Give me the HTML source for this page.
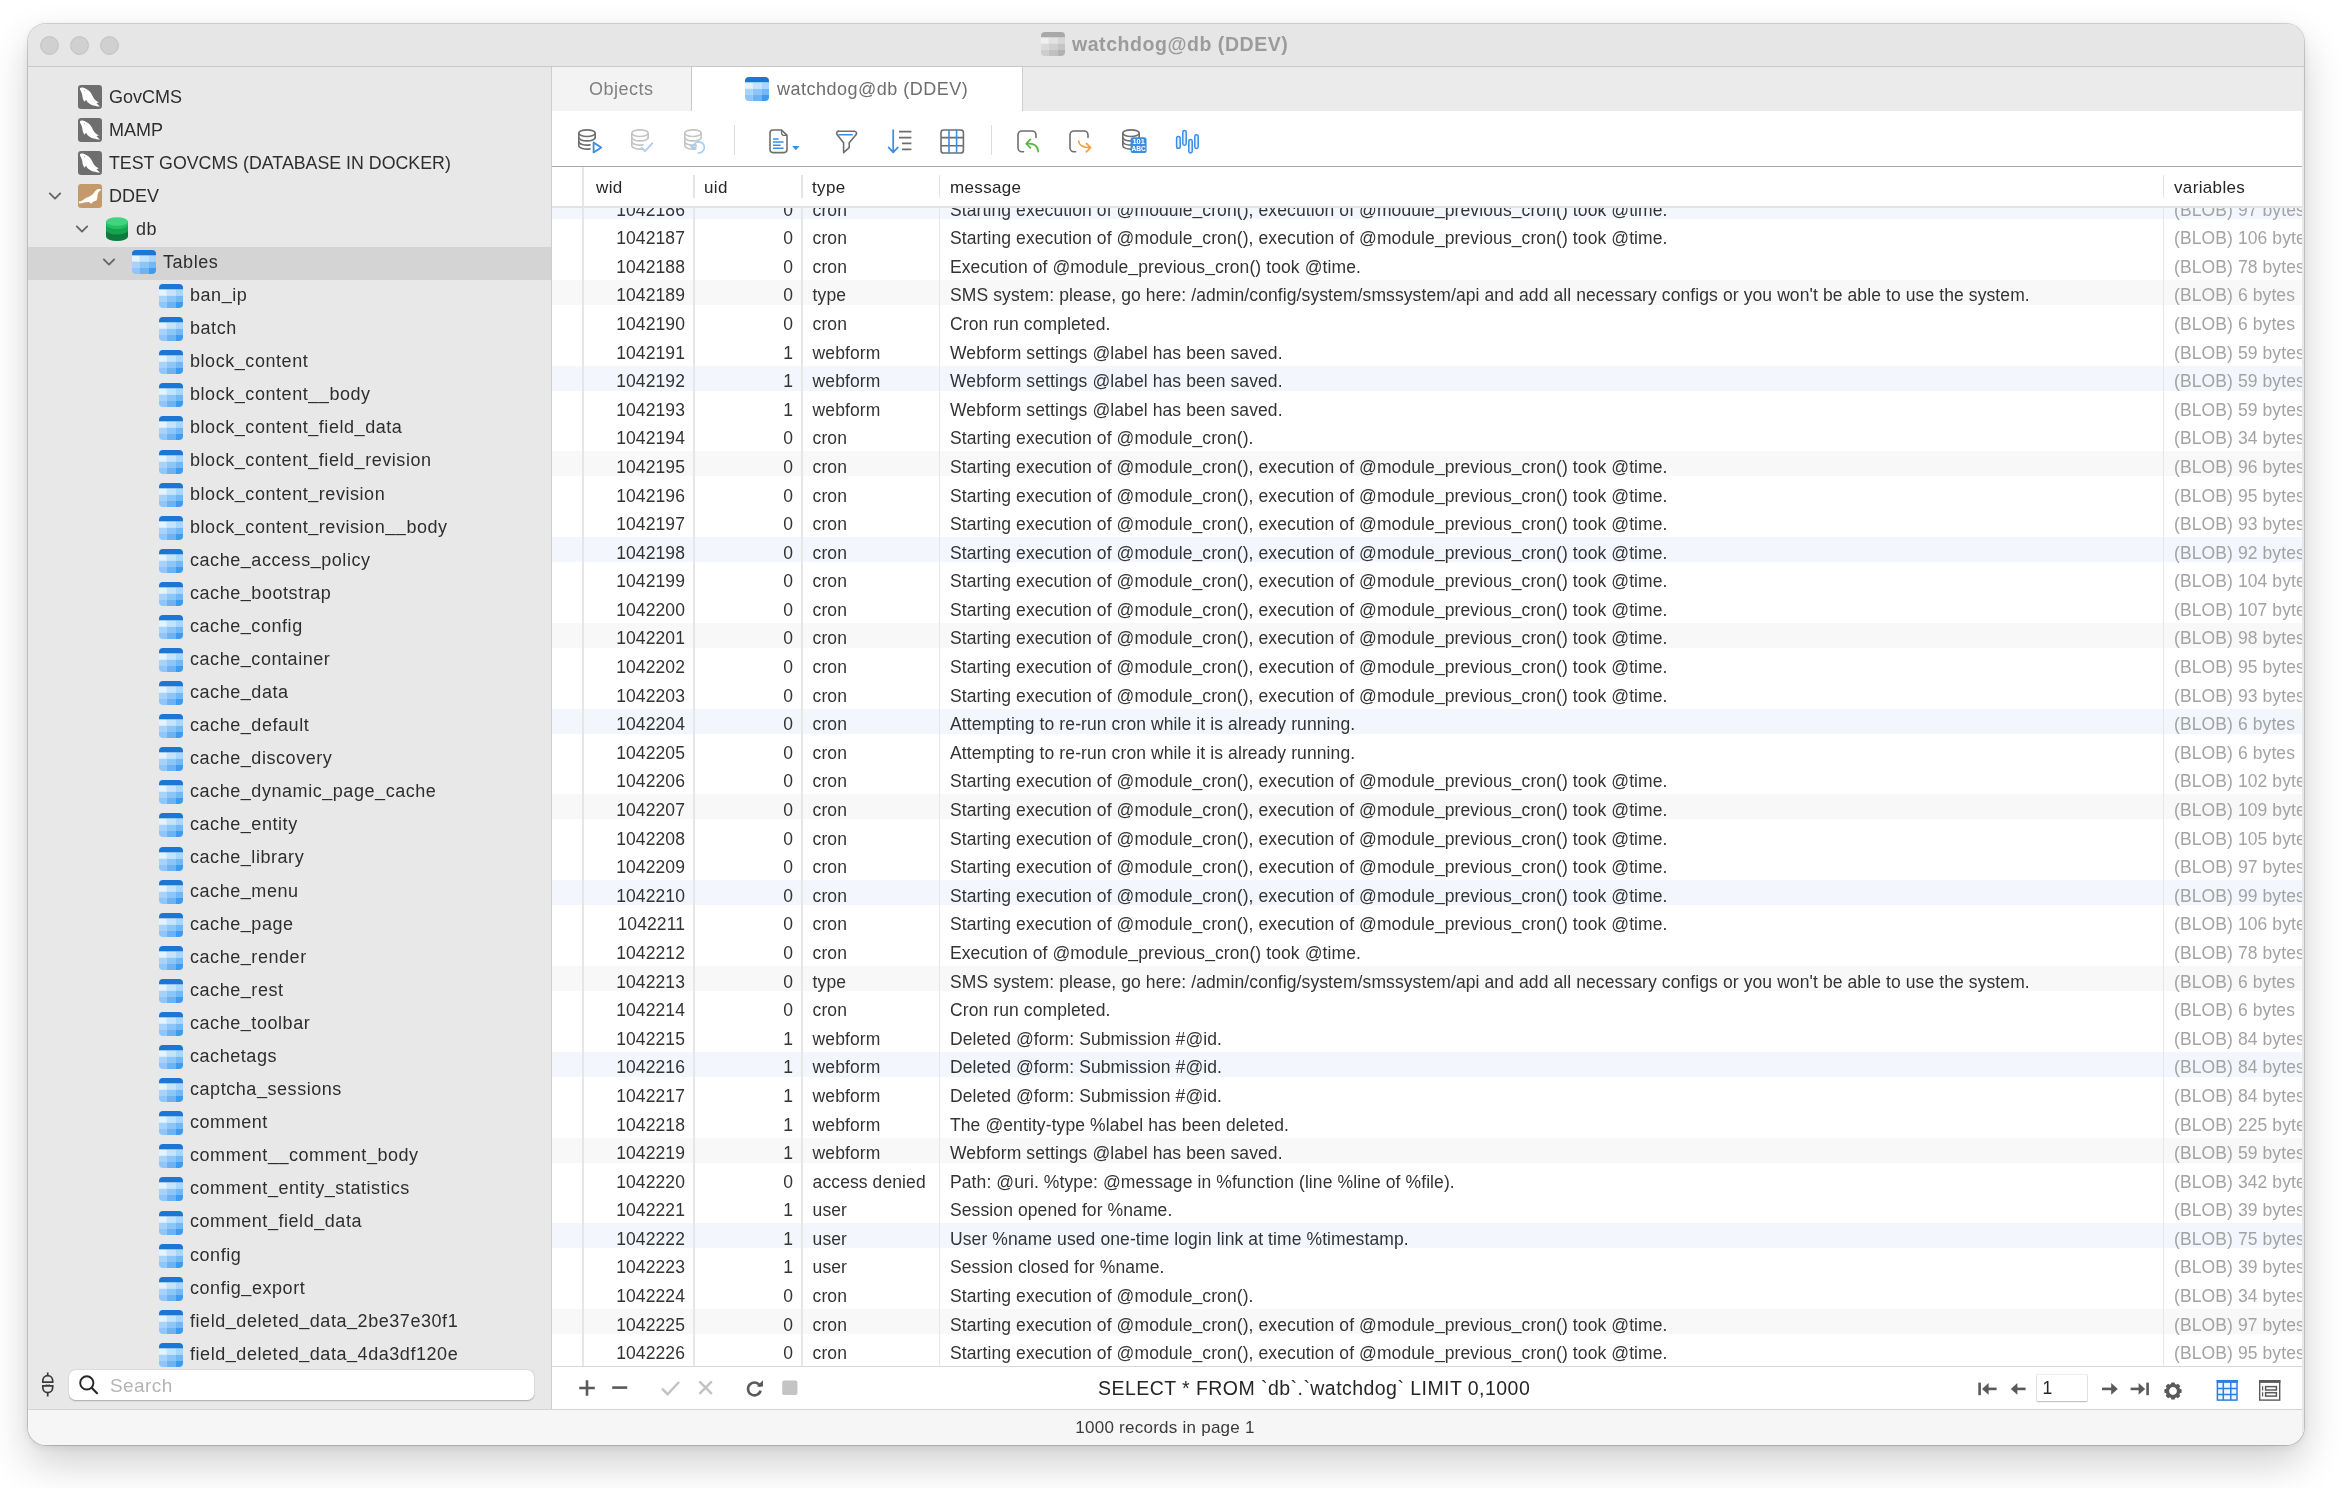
<!DOCTYPE html>
<html><head><meta charset="utf-8"><title>watchdog@db (DDEV)</title><style>
*{margin:0;padding:0;box-sizing:border-box}
html,body{width:2350px;height:1488px;overflow:hidden;background:#fff;font-family:"Liberation Sans", sans-serif;}
#win{will-change:transform;position:absolute;left:28px;top:24px;width:2276px;height:1421px;border-radius:18px;overflow:hidden;
  background:#f6f6f6;box-shadow:0 0 0 1px rgba(0,0,0,0.16),0 18px 40px rgba(0,0,0,0.19),0 2px 10px rgba(0,0,0,0.09);}
.a{position:absolute}
.t{position:absolute;white-space:pre;line-height:1;-webkit-font-smoothing:antialiased}
svg{position:absolute;overflow:visible}
</style></head>
<body><div id="win">
<div class="a" style="left:0px;top:-1px;width:2277px;height:43px;background:#e6e6e6"></div>
<div class="a" style="left:0px;top:42px;width:2277px;height:1px;background:#c9c9c9"></div>
<svg style="left:11.5px;top:11.5px" width="19" height="19" viewBox="0 0 19 19"><circle cx="9.5" cy="9.5" r="8.9" fill="#d0d0d0" stroke="#bdbdbd" stroke-width="0.9"/></svg>
<svg style="left:41.5px;top:11.5px" width="19" height="19" viewBox="0 0 19 19"><circle cx="9.5" cy="9.5" r="8.9" fill="#d0d0d0" stroke="#bdbdbd" stroke-width="0.9"/></svg>
<svg style="left:71.5px;top:11.5px" width="19" height="19" viewBox="0 0 19 19"><circle cx="9.5" cy="9.5" r="8.9" fill="#d0d0d0" stroke="#bdbdbd" stroke-width="0.9"/></svg>
<svg style="left:1013px;top:8px" width="24" height="24" viewBox="0 0 24 24"><defs><clipPath id="c1041_32"><rect x="0" y="0" width="24" height="24" rx="4.0"/></clipPath></defs><g clip-path="url(#c1041_32)"><rect x="0" y="0" width="24" height="5.60" fill="#a8a8a8"/><rect x="0.00" y="5.50" width="7.70" height="6.30" fill="#f0f0f0"/><rect x="7.70" y="5.50" width="9.30" height="6.30" fill="#e2e2e2"/><rect x="17.00" y="5.50" width="7.00" height="6.30" fill="#d6d6d6"/><rect x="0.00" y="11.80" width="7.70" height="6.20" fill="#dadada"/><rect x="7.70" y="11.80" width="9.30" height="6.20" fill="#cfcfcf"/><rect x="17.00" y="11.80" width="7.00" height="6.20" fill="#c4c4c4"/><rect x="0.00" y="18.00" width="7.70" height="6.00" fill="#cdcdcd"/><rect x="7.70" y="18.00" width="9.30" height="6.00" fill="#c0c0c0"/><rect x="17.00" y="18.00" width="7.00" height="6.00" fill="#b2b2b2"/></g></svg>
<div class="t" style="left:1044px;top:10.69px;font-size:19.5px;color:#9b9b9b;letter-spacing:0.55px;font-weight:bold;">watchdog@db (DDEV)</div>
<div class="a" style="left:0px;top:43px;width:523px;height:1342px;background:#e8e8e8"></div>
<div class="a" style="left:523px;top:43px;width:1px;height:1342px;background:#cdcdcd"></div>
<div class="a" style="left:0px;top:223px;width:523px;height:33px;background:#d4d4d4"></div>
<svg style="left:50px;top:61px" width="24" height="24" viewBox="0 0 24 24"><rect x="0" y="0" width="24" height="24" rx="3.2" fill="#6e6e6e"/><path d="M1.9 3.5 C2.5 2.2 4.5 2.2 5.6 2.7 C8 3.6 10.5 5 12 6.8 C13.5 8.6 14.6 11 15.6 13 C16.6 14.8 18.6 16.4 20.9 17.3 L18.5 18.3 L21.9 21.6 C20 21.4 17.4 21 15.5 20.5 C13 19.8 10.8 18.6 9.4 17 C8.8 16.2 8.4 15.4 8.2 14.7 L6.2 16.7 L5.2 14.3 C4.8 13.4 4.5 12.5 4.5 11.7 C4.3 9.6 3.6 7.4 3 6.4 C2.4 5.4 1.9 4.5 1.9 3.5 Z" fill="#fff"/><circle cx="6.5" cy="5.7" r="0.55" fill="#9a9a9a"/></svg>
<div class="t" style="left:81px;top:64.36px;font-size:18px;color:#2e2e2e;letter-spacing:0px;font-weight:normal;">GovCMS</div>
<svg style="left:50px;top:94px" width="24" height="24" viewBox="0 0 24 24"><rect x="0" y="0" width="24" height="24" rx="3.2" fill="#6e6e6e"/><path d="M1.9 3.5 C2.5 2.2 4.5 2.2 5.6 2.7 C8 3.6 10.5 5 12 6.8 C13.5 8.6 14.6 11 15.6 13 C16.6 14.8 18.6 16.4 20.9 17.3 L18.5 18.3 L21.9 21.6 C20 21.4 17.4 21 15.5 20.5 C13 19.8 10.8 18.6 9.4 17 C8.8 16.2 8.4 15.4 8.2 14.7 L6.2 16.7 L5.2 14.3 C4.8 13.4 4.5 12.5 4.5 11.7 C4.3 9.6 3.6 7.4 3 6.4 C2.4 5.4 1.9 4.5 1.9 3.5 Z" fill="#fff"/><circle cx="6.5" cy="5.7" r="0.55" fill="#9a9a9a"/></svg>
<div class="t" style="left:81px;top:97.36px;font-size:18px;color:#2e2e2e;letter-spacing:0px;font-weight:normal;">MAMP</div>
<svg style="left:50px;top:127px" width="24" height="24" viewBox="0 0 24 24"><rect x="0" y="0" width="24" height="24" rx="3.2" fill="#6e6e6e"/><path d="M1.9 3.5 C2.5 2.2 4.5 2.2 5.6 2.7 C8 3.6 10.5 5 12 6.8 C13.5 8.6 14.6 11 15.6 13 C16.6 14.8 18.6 16.4 20.9 17.3 L18.5 18.3 L21.9 21.6 C20 21.4 17.4 21 15.5 20.5 C13 19.8 10.8 18.6 9.4 17 C8.8 16.2 8.4 15.4 8.2 14.7 L6.2 16.7 L5.2 14.3 C4.8 13.4 4.5 12.5 4.5 11.7 C4.3 9.6 3.6 7.4 3 6.4 C2.4 5.4 1.9 4.5 1.9 3.5 Z" fill="#fff"/><circle cx="6.5" cy="5.7" r="0.55" fill="#9a9a9a"/></svg>
<div class="t" style="left:81px;top:130.53px;font-size:17.8px;color:#2e2e2e;letter-spacing:0px;font-weight:normal;">TEST GOVCMS (DATABASE IN DOCKER)</div>
<svg style="left:20px;top:167px" width="14" height="10" viewBox="0 0 14 10"><path d="M1.8 2.4 L7 7.6 L12.2 2.4" fill="none" stroke="#666666" stroke-width="1.9" stroke-linecap="round" stroke-linejoin="round"/></svg>
<svg style="left:50px;top:160px" width="24" height="24" viewBox="0 0 24 24"><rect x="0" y="0" width="24" height="24" rx="3.2" fill="#c49a6c"/><path d="M22.7 5.3 C22.2 4.7 21 4.8 19.6 5.3 C18.2 5.9 17 7.2 15.6 9.3 C14.6 10.6 13 11.8 10.9 12.8 C8.6 13.8 6.4 14.8 4.4 16.4 C3.4 17 2.2 17.3 1 17.6 C0.8 18.4 1 19.2 1.6 19.6 C2.6 19.5 3.4 19.3 4.4 19.1 C6.4 18.5 8.6 18.1 10.9 18.1 C11.6 18.4 12.2 19 13 19.8 C13.6 19.4 13.9 19 14.1 18.7 C15 17.8 16.2 17.4 18.4 16.6 C19 15.6 19.3 14.4 19.5 12.6 C19.7 10.6 19.9 9.4 20.4 8.6 C21 7.6 21.8 7.1 22.6 6.6 C22.9 6.2 22.9 5.7 22.7 5.3 Z" fill="#fff"/></svg>
<div class="t" style="left:81px;top:163.36px;font-size:18px;color:#2e2e2e;letter-spacing:0px;font-weight:normal;">DDEV</div>
<svg style="left:47px;top:200px" width="14" height="10" viewBox="0 0 14 10"><path d="M1.8 2.4 L7 7.6 L12.2 2.4" fill="none" stroke="#666666" stroke-width="1.9" stroke-linecap="round" stroke-linejoin="round"/></svg>
<svg style="left:78px;top:193px" width="22" height="24" viewBox="0 0 22 24"><ellipse cx="11" cy="19.5" rx="11" ry="4.5" fill="#0d7a3e"/><rect x="0" y="13" width="22" height="6.5" fill="#0d7a3e"/>
<ellipse cx="11" cy="13" rx="11" ry="4.5" fill="#16a34f"/><rect x="0" y="7.5" width="22" height="5.5" fill="#16a34f"/>
<ellipse cx="11" cy="7.5" rx="11" ry="4.5" fill="#22c063"/><rect x="0" y="4.5" width="22" height="3" fill="#22c063"/>
<ellipse cx="11" cy="4.5" rx="11" ry="4.3" fill="#3fd47d"/></svg>
<div class="t" style="left:108px;top:196.36px;font-size:18px;color:#2e2e2e;letter-spacing:0.55px;font-weight:normal;">db</div>
<svg style="left:74px;top:233px" width="14" height="10" viewBox="0 0 14 10"><path d="M1.8 2.4 L7 7.6 L12.2 2.4" fill="none" stroke="#666666" stroke-width="1.9" stroke-linecap="round" stroke-linejoin="round"/></svg>
<svg style="left:104px;top:226px" width="24" height="24" viewBox="0 0 24 24"><defs><clipPath id="c132_250"><rect x="0" y="0" width="24" height="24" rx="4.0"/></clipPath></defs><g clip-path="url(#c132_250)"><rect x="0" y="0" width="24" height="5.60" fill="#1b76d4"/><rect x="0.00" y="5.50" width="7.70" height="6.30" fill="#e3f3ff"/><rect x="7.70" y="5.50" width="9.30" height="6.30" fill="#c3e4ff"/><rect x="17.00" y="5.50" width="7.00" height="6.30" fill="#a9d6fd"/><rect x="0.00" y="11.80" width="7.70" height="6.20" fill="#a7d3fb"/><rect x="7.70" y="11.80" width="9.30" height="6.20" fill="#8cc6f9"/><rect x="17.00" y="11.80" width="7.00" height="6.20" fill="#72b8f7"/><rect x="0.00" y="18.00" width="7.70" height="6.00" fill="#8fc5f8"/><rect x="7.70" y="18.00" width="9.30" height="6.00" fill="#6db3f4"/><rect x="17.00" y="18.00" width="7.00" height="6.00" fill="#3d9cf2"/></g></svg>
<div class="t" style="left:135px;top:229.36px;font-size:18px;color:#2e2e2e;letter-spacing:0.55px;font-weight:normal;">Tables</div>
<svg style="left:131px;top:260.0px" width="24" height="24" viewBox="0 0 24 24"><defs><clipPath id="c159_284_0"><rect x="0" y="0" width="24" height="24" rx="4.0"/></clipPath></defs><g clip-path="url(#c159_284_0)"><rect x="0" y="0" width="24" height="5.60" fill="#1b76d4"/><rect x="0.00" y="5.50" width="7.70" height="6.30" fill="#e3f3ff"/><rect x="7.70" y="5.50" width="9.30" height="6.30" fill="#c3e4ff"/><rect x="17.00" y="5.50" width="7.00" height="6.30" fill="#a9d6fd"/><rect x="0.00" y="11.80" width="7.70" height="6.20" fill="#a7d3fb"/><rect x="7.70" y="11.80" width="9.30" height="6.20" fill="#8cc6f9"/><rect x="17.00" y="11.80" width="7.00" height="6.20" fill="#72b8f7"/><rect x="0.00" y="18.00" width="7.70" height="6.00" fill="#8fc5f8"/><rect x="7.70" y="18.00" width="9.30" height="6.00" fill="#6db3f4"/><rect x="17.00" y="18.00" width="7.00" height="6.00" fill="#3d9cf2"/></g></svg>
<div class="t" style="left:162px;top:261.96px;font-size:18px;color:#2e2e2e;letter-spacing:0.55px;font-weight:normal;">ban<span style="position:relative;top:-1.6px">_</span>ip</div>
<svg style="left:131px;top:293.1px" width="24" height="24" viewBox="0 0 24 24"><defs><clipPath id="c159_317_1"><rect x="0" y="0" width="24" height="24" rx="4.0"/></clipPath></defs><g clip-path="url(#c159_317_1)"><rect x="0" y="0" width="24" height="5.60" fill="#1b76d4"/><rect x="0.00" y="5.50" width="7.70" height="6.30" fill="#e3f3ff"/><rect x="7.70" y="5.50" width="9.30" height="6.30" fill="#c3e4ff"/><rect x="17.00" y="5.50" width="7.00" height="6.30" fill="#a9d6fd"/><rect x="0.00" y="11.80" width="7.70" height="6.20" fill="#a7d3fb"/><rect x="7.70" y="11.80" width="9.30" height="6.20" fill="#8cc6f9"/><rect x="17.00" y="11.80" width="7.00" height="6.20" fill="#72b8f7"/><rect x="0.00" y="18.00" width="7.70" height="6.00" fill="#8fc5f8"/><rect x="7.70" y="18.00" width="9.30" height="6.00" fill="#6db3f4"/><rect x="17.00" y="18.00" width="7.00" height="6.00" fill="#3d9cf2"/></g></svg>
<div class="t" style="left:162px;top:295.05px;font-size:18px;color:#2e2e2e;letter-spacing:0.55px;font-weight:normal;">batch</div>
<svg style="left:131px;top:326.2px" width="24" height="24" viewBox="0 0 24 24"><defs><clipPath id="c159_350_2"><rect x="0" y="0" width="24" height="24" rx="4.0"/></clipPath></defs><g clip-path="url(#c159_350_2)"><rect x="0" y="0" width="24" height="5.60" fill="#1b76d4"/><rect x="0.00" y="5.50" width="7.70" height="6.30" fill="#e3f3ff"/><rect x="7.70" y="5.50" width="9.30" height="6.30" fill="#c3e4ff"/><rect x="17.00" y="5.50" width="7.00" height="6.30" fill="#a9d6fd"/><rect x="0.00" y="11.80" width="7.70" height="6.20" fill="#a7d3fb"/><rect x="7.70" y="11.80" width="9.30" height="6.20" fill="#8cc6f9"/><rect x="17.00" y="11.80" width="7.00" height="6.20" fill="#72b8f7"/><rect x="0.00" y="18.00" width="7.70" height="6.00" fill="#8fc5f8"/><rect x="7.70" y="18.00" width="9.30" height="6.00" fill="#6db3f4"/><rect x="17.00" y="18.00" width="7.00" height="6.00" fill="#3d9cf2"/></g></svg>
<div class="t" style="left:162px;top:328.14px;font-size:18px;color:#2e2e2e;letter-spacing:0.55px;font-weight:normal;">block<span style="position:relative;top:-1.6px">_</span>content</div>
<svg style="left:131px;top:359.3px" width="24" height="24" viewBox="0 0 24 24"><defs><clipPath id="c159_383_3"><rect x="0" y="0" width="24" height="24" rx="4.0"/></clipPath></defs><g clip-path="url(#c159_383_3)"><rect x="0" y="0" width="24" height="5.60" fill="#1b76d4"/><rect x="0.00" y="5.50" width="7.70" height="6.30" fill="#e3f3ff"/><rect x="7.70" y="5.50" width="9.30" height="6.30" fill="#c3e4ff"/><rect x="17.00" y="5.50" width="7.00" height="6.30" fill="#a9d6fd"/><rect x="0.00" y="11.80" width="7.70" height="6.20" fill="#a7d3fb"/><rect x="7.70" y="11.80" width="9.30" height="6.20" fill="#8cc6f9"/><rect x="17.00" y="11.80" width="7.00" height="6.20" fill="#72b8f7"/><rect x="0.00" y="18.00" width="7.70" height="6.00" fill="#8fc5f8"/><rect x="7.70" y="18.00" width="9.30" height="6.00" fill="#6db3f4"/><rect x="17.00" y="18.00" width="7.00" height="6.00" fill="#3d9cf2"/></g></svg>
<div class="t" style="left:162px;top:361.23px;font-size:18px;color:#2e2e2e;letter-spacing:0.55px;font-weight:normal;">block<span style="position:relative;top:-1.6px">_</span>content<span style="position:relative;top:-1.6px">_</span><span style="position:relative;top:-1.6px">_</span>body</div>
<svg style="left:131px;top:392.4px" width="24" height="24" viewBox="0 0 24 24"><defs><clipPath id="c159_416_4"><rect x="0" y="0" width="24" height="24" rx="4.0"/></clipPath></defs><g clip-path="url(#c159_416_4)"><rect x="0" y="0" width="24" height="5.60" fill="#1b76d4"/><rect x="0.00" y="5.50" width="7.70" height="6.30" fill="#e3f3ff"/><rect x="7.70" y="5.50" width="9.30" height="6.30" fill="#c3e4ff"/><rect x="17.00" y="5.50" width="7.00" height="6.30" fill="#a9d6fd"/><rect x="0.00" y="11.80" width="7.70" height="6.20" fill="#a7d3fb"/><rect x="7.70" y="11.80" width="9.30" height="6.20" fill="#8cc6f9"/><rect x="17.00" y="11.80" width="7.00" height="6.20" fill="#72b8f7"/><rect x="0.00" y="18.00" width="7.70" height="6.00" fill="#8fc5f8"/><rect x="7.70" y="18.00" width="9.30" height="6.00" fill="#6db3f4"/><rect x="17.00" y="18.00" width="7.00" height="6.00" fill="#3d9cf2"/></g></svg>
<div class="t" style="left:162px;top:394.32px;font-size:18px;color:#2e2e2e;letter-spacing:0.55px;font-weight:normal;">block<span style="position:relative;top:-1.6px">_</span>content<span style="position:relative;top:-1.6px">_</span>field<span style="position:relative;top:-1.6px">_</span>data</div>
<svg style="left:131px;top:425.5px" width="24" height="24" viewBox="0 0 24 24"><defs><clipPath id="c159_449_5"><rect x="0" y="0" width="24" height="24" rx="4.0"/></clipPath></defs><g clip-path="url(#c159_449_5)"><rect x="0" y="0" width="24" height="5.60" fill="#1b76d4"/><rect x="0.00" y="5.50" width="7.70" height="6.30" fill="#e3f3ff"/><rect x="7.70" y="5.50" width="9.30" height="6.30" fill="#c3e4ff"/><rect x="17.00" y="5.50" width="7.00" height="6.30" fill="#a9d6fd"/><rect x="0.00" y="11.80" width="7.70" height="6.20" fill="#a7d3fb"/><rect x="7.70" y="11.80" width="9.30" height="6.20" fill="#8cc6f9"/><rect x="17.00" y="11.80" width="7.00" height="6.20" fill="#72b8f7"/><rect x="0.00" y="18.00" width="7.70" height="6.00" fill="#8fc5f8"/><rect x="7.70" y="18.00" width="9.30" height="6.00" fill="#6db3f4"/><rect x="17.00" y="18.00" width="7.00" height="6.00" fill="#3d9cf2"/></g></svg>
<div class="t" style="left:162px;top:427.41px;font-size:18px;color:#2e2e2e;letter-spacing:0.55px;font-weight:normal;">block<span style="position:relative;top:-1.6px">_</span>content<span style="position:relative;top:-1.6px">_</span>field<span style="position:relative;top:-1.6px">_</span>revision</div>
<svg style="left:131px;top:458.5px" width="24" height="24" viewBox="0 0 24 24"><defs><clipPath id="c159_482_5"><rect x="0" y="0" width="24" height="24" rx="4.0"/></clipPath></defs><g clip-path="url(#c159_482_5)"><rect x="0" y="0" width="24" height="5.60" fill="#1b76d4"/><rect x="0.00" y="5.50" width="7.70" height="6.30" fill="#e3f3ff"/><rect x="7.70" y="5.50" width="9.30" height="6.30" fill="#c3e4ff"/><rect x="17.00" y="5.50" width="7.00" height="6.30" fill="#a9d6fd"/><rect x="0.00" y="11.80" width="7.70" height="6.20" fill="#a7d3fb"/><rect x="7.70" y="11.80" width="9.30" height="6.20" fill="#8cc6f9"/><rect x="17.00" y="11.80" width="7.00" height="6.20" fill="#72b8f7"/><rect x="0.00" y="18.00" width="7.70" height="6.00" fill="#8fc5f8"/><rect x="7.70" y="18.00" width="9.30" height="6.00" fill="#6db3f4"/><rect x="17.00" y="18.00" width="7.00" height="6.00" fill="#3d9cf2"/></g></svg>
<div class="t" style="left:162px;top:460.50px;font-size:18px;color:#2e2e2e;letter-spacing:0.55px;font-weight:normal;">block<span style="position:relative;top:-1.6px">_</span>content<span style="position:relative;top:-1.6px">_</span>revision</div>
<svg style="left:131px;top:491.6px" width="24" height="24" viewBox="0 0 24 24"><defs><clipPath id="c159_515_6"><rect x="0" y="0" width="24" height="24" rx="4.0"/></clipPath></defs><g clip-path="url(#c159_515_6)"><rect x="0" y="0" width="24" height="5.60" fill="#1b76d4"/><rect x="0.00" y="5.50" width="7.70" height="6.30" fill="#e3f3ff"/><rect x="7.70" y="5.50" width="9.30" height="6.30" fill="#c3e4ff"/><rect x="17.00" y="5.50" width="7.00" height="6.30" fill="#a9d6fd"/><rect x="0.00" y="11.80" width="7.70" height="6.20" fill="#a7d3fb"/><rect x="7.70" y="11.80" width="9.30" height="6.20" fill="#8cc6f9"/><rect x="17.00" y="11.80" width="7.00" height="6.20" fill="#72b8f7"/><rect x="0.00" y="18.00" width="7.70" height="6.00" fill="#8fc5f8"/><rect x="7.70" y="18.00" width="9.30" height="6.00" fill="#6db3f4"/><rect x="17.00" y="18.00" width="7.00" height="6.00" fill="#3d9cf2"/></g></svg>
<div class="t" style="left:162px;top:493.59px;font-size:18px;color:#2e2e2e;letter-spacing:0.55px;font-weight:normal;">block<span style="position:relative;top:-1.6px">_</span>content<span style="position:relative;top:-1.6px">_</span>revision<span style="position:relative;top:-1.6px">_</span><span style="position:relative;top:-1.6px">_</span>body</div>
<svg style="left:131px;top:524.7px" width="24" height="24" viewBox="0 0 24 24"><defs><clipPath id="c159_548_7"><rect x="0" y="0" width="24" height="24" rx="4.0"/></clipPath></defs><g clip-path="url(#c159_548_7)"><rect x="0" y="0" width="24" height="5.60" fill="#1b76d4"/><rect x="0.00" y="5.50" width="7.70" height="6.30" fill="#e3f3ff"/><rect x="7.70" y="5.50" width="9.30" height="6.30" fill="#c3e4ff"/><rect x="17.00" y="5.50" width="7.00" height="6.30" fill="#a9d6fd"/><rect x="0.00" y="11.80" width="7.70" height="6.20" fill="#a7d3fb"/><rect x="7.70" y="11.80" width="9.30" height="6.20" fill="#8cc6f9"/><rect x="17.00" y="11.80" width="7.00" height="6.20" fill="#72b8f7"/><rect x="0.00" y="18.00" width="7.70" height="6.00" fill="#8fc5f8"/><rect x="7.70" y="18.00" width="9.30" height="6.00" fill="#6db3f4"/><rect x="17.00" y="18.00" width="7.00" height="6.00" fill="#3d9cf2"/></g></svg>
<div class="t" style="left:162px;top:526.68px;font-size:18px;color:#2e2e2e;letter-spacing:0.55px;font-weight:normal;">cache<span style="position:relative;top:-1.6px">_</span>access<span style="position:relative;top:-1.6px">_</span>policy</div>
<svg style="left:131px;top:557.8px" width="24" height="24" viewBox="0 0 24 24"><defs><clipPath id="c159_581_8"><rect x="0" y="0" width="24" height="24" rx="4.0"/></clipPath></defs><g clip-path="url(#c159_581_8)"><rect x="0" y="0" width="24" height="5.60" fill="#1b76d4"/><rect x="0.00" y="5.50" width="7.70" height="6.30" fill="#e3f3ff"/><rect x="7.70" y="5.50" width="9.30" height="6.30" fill="#c3e4ff"/><rect x="17.00" y="5.50" width="7.00" height="6.30" fill="#a9d6fd"/><rect x="0.00" y="11.80" width="7.70" height="6.20" fill="#a7d3fb"/><rect x="7.70" y="11.80" width="9.30" height="6.20" fill="#8cc6f9"/><rect x="17.00" y="11.80" width="7.00" height="6.20" fill="#72b8f7"/><rect x="0.00" y="18.00" width="7.70" height="6.00" fill="#8fc5f8"/><rect x="7.70" y="18.00" width="9.30" height="6.00" fill="#6db3f4"/><rect x="17.00" y="18.00" width="7.00" height="6.00" fill="#3d9cf2"/></g></svg>
<div class="t" style="left:162px;top:559.77px;font-size:18px;color:#2e2e2e;letter-spacing:0.55px;font-weight:normal;">cache<span style="position:relative;top:-1.6px">_</span>bootstrap</div>
<svg style="left:131px;top:590.9px" width="24" height="24" viewBox="0 0 24 24"><defs><clipPath id="c159_614_9"><rect x="0" y="0" width="24" height="24" rx="4.0"/></clipPath></defs><g clip-path="url(#c159_614_9)"><rect x="0" y="0" width="24" height="5.60" fill="#1b76d4"/><rect x="0.00" y="5.50" width="7.70" height="6.30" fill="#e3f3ff"/><rect x="7.70" y="5.50" width="9.30" height="6.30" fill="#c3e4ff"/><rect x="17.00" y="5.50" width="7.00" height="6.30" fill="#a9d6fd"/><rect x="0.00" y="11.80" width="7.70" height="6.20" fill="#a7d3fb"/><rect x="7.70" y="11.80" width="9.30" height="6.20" fill="#8cc6f9"/><rect x="17.00" y="11.80" width="7.00" height="6.20" fill="#72b8f7"/><rect x="0.00" y="18.00" width="7.70" height="6.00" fill="#8fc5f8"/><rect x="7.70" y="18.00" width="9.30" height="6.00" fill="#6db3f4"/><rect x="17.00" y="18.00" width="7.00" height="6.00" fill="#3d9cf2"/></g></svg>
<div class="t" style="left:162px;top:592.86px;font-size:18px;color:#2e2e2e;letter-spacing:0.55px;font-weight:normal;">cache<span style="position:relative;top:-1.6px">_</span>config</div>
<svg style="left:131px;top:624.0px" width="24" height="24" viewBox="0 0 24 24"><defs><clipPath id="c159_648_0"><rect x="0" y="0" width="24" height="24" rx="4.0"/></clipPath></defs><g clip-path="url(#c159_648_0)"><rect x="0" y="0" width="24" height="5.60" fill="#1b76d4"/><rect x="0.00" y="5.50" width="7.70" height="6.30" fill="#e3f3ff"/><rect x="7.70" y="5.50" width="9.30" height="6.30" fill="#c3e4ff"/><rect x="17.00" y="5.50" width="7.00" height="6.30" fill="#a9d6fd"/><rect x="0.00" y="11.80" width="7.70" height="6.20" fill="#a7d3fb"/><rect x="7.70" y="11.80" width="9.30" height="6.20" fill="#8cc6f9"/><rect x="17.00" y="11.80" width="7.00" height="6.20" fill="#72b8f7"/><rect x="0.00" y="18.00" width="7.70" height="6.00" fill="#8fc5f8"/><rect x="7.70" y="18.00" width="9.30" height="6.00" fill="#6db3f4"/><rect x="17.00" y="18.00" width="7.00" height="6.00" fill="#3d9cf2"/></g></svg>
<div class="t" style="left:162px;top:625.95px;font-size:18px;color:#2e2e2e;letter-spacing:0.55px;font-weight:normal;">cache<span style="position:relative;top:-1.6px">_</span>container</div>
<svg style="left:131px;top:657.1px" width="24" height="24" viewBox="0 0 24 24"><defs><clipPath id="c159_681_1"><rect x="0" y="0" width="24" height="24" rx="4.0"/></clipPath></defs><g clip-path="url(#c159_681_1)"><rect x="0" y="0" width="24" height="5.60" fill="#1b76d4"/><rect x="0.00" y="5.50" width="7.70" height="6.30" fill="#e3f3ff"/><rect x="7.70" y="5.50" width="9.30" height="6.30" fill="#c3e4ff"/><rect x="17.00" y="5.50" width="7.00" height="6.30" fill="#a9d6fd"/><rect x="0.00" y="11.80" width="7.70" height="6.20" fill="#a7d3fb"/><rect x="7.70" y="11.80" width="9.30" height="6.20" fill="#8cc6f9"/><rect x="17.00" y="11.80" width="7.00" height="6.20" fill="#72b8f7"/><rect x="0.00" y="18.00" width="7.70" height="6.00" fill="#8fc5f8"/><rect x="7.70" y="18.00" width="9.30" height="6.00" fill="#6db3f4"/><rect x="17.00" y="18.00" width="7.00" height="6.00" fill="#3d9cf2"/></g></svg>
<div class="t" style="left:162px;top:659.04px;font-size:18px;color:#2e2e2e;letter-spacing:0.55px;font-weight:normal;">cache<span style="position:relative;top:-1.6px">_</span>data</div>
<svg style="left:131px;top:690.2px" width="24" height="24" viewBox="0 0 24 24"><defs><clipPath id="c159_714_2"><rect x="0" y="0" width="24" height="24" rx="4.0"/></clipPath></defs><g clip-path="url(#c159_714_2)"><rect x="0" y="0" width="24" height="5.60" fill="#1b76d4"/><rect x="0.00" y="5.50" width="7.70" height="6.30" fill="#e3f3ff"/><rect x="7.70" y="5.50" width="9.30" height="6.30" fill="#c3e4ff"/><rect x="17.00" y="5.50" width="7.00" height="6.30" fill="#a9d6fd"/><rect x="0.00" y="11.80" width="7.70" height="6.20" fill="#a7d3fb"/><rect x="7.70" y="11.80" width="9.30" height="6.20" fill="#8cc6f9"/><rect x="17.00" y="11.80" width="7.00" height="6.20" fill="#72b8f7"/><rect x="0.00" y="18.00" width="7.70" height="6.00" fill="#8fc5f8"/><rect x="7.70" y="18.00" width="9.30" height="6.00" fill="#6db3f4"/><rect x="17.00" y="18.00" width="7.00" height="6.00" fill="#3d9cf2"/></g></svg>
<div class="t" style="left:162px;top:692.13px;font-size:18px;color:#2e2e2e;letter-spacing:0.55px;font-weight:normal;">cache<span style="position:relative;top:-1.6px">_</span>default</div>
<svg style="left:131px;top:723.3px" width="24" height="24" viewBox="0 0 24 24"><defs><clipPath id="c159_747_3"><rect x="0" y="0" width="24" height="24" rx="4.0"/></clipPath></defs><g clip-path="url(#c159_747_3)"><rect x="0" y="0" width="24" height="5.60" fill="#1b76d4"/><rect x="0.00" y="5.50" width="7.70" height="6.30" fill="#e3f3ff"/><rect x="7.70" y="5.50" width="9.30" height="6.30" fill="#c3e4ff"/><rect x="17.00" y="5.50" width="7.00" height="6.30" fill="#a9d6fd"/><rect x="0.00" y="11.80" width="7.70" height="6.20" fill="#a7d3fb"/><rect x="7.70" y="11.80" width="9.30" height="6.20" fill="#8cc6f9"/><rect x="17.00" y="11.80" width="7.00" height="6.20" fill="#72b8f7"/><rect x="0.00" y="18.00" width="7.70" height="6.00" fill="#8fc5f8"/><rect x="7.70" y="18.00" width="9.30" height="6.00" fill="#6db3f4"/><rect x="17.00" y="18.00" width="7.00" height="6.00" fill="#3d9cf2"/></g></svg>
<div class="t" style="left:162px;top:725.22px;font-size:18px;color:#2e2e2e;letter-spacing:0.55px;font-weight:normal;">cache<span style="position:relative;top:-1.6px">_</span>discovery</div>
<svg style="left:131px;top:756.4px" width="24" height="24" viewBox="0 0 24 24"><defs><clipPath id="c159_780_4"><rect x="0" y="0" width="24" height="24" rx="4.0"/></clipPath></defs><g clip-path="url(#c159_780_4)"><rect x="0" y="0" width="24" height="5.60" fill="#1b76d4"/><rect x="0.00" y="5.50" width="7.70" height="6.30" fill="#e3f3ff"/><rect x="7.70" y="5.50" width="9.30" height="6.30" fill="#c3e4ff"/><rect x="17.00" y="5.50" width="7.00" height="6.30" fill="#a9d6fd"/><rect x="0.00" y="11.80" width="7.70" height="6.20" fill="#a7d3fb"/><rect x="7.70" y="11.80" width="9.30" height="6.20" fill="#8cc6f9"/><rect x="17.00" y="11.80" width="7.00" height="6.20" fill="#72b8f7"/><rect x="0.00" y="18.00" width="7.70" height="6.00" fill="#8fc5f8"/><rect x="7.70" y="18.00" width="9.30" height="6.00" fill="#6db3f4"/><rect x="17.00" y="18.00" width="7.00" height="6.00" fill="#3d9cf2"/></g></svg>
<div class="t" style="left:162px;top:758.31px;font-size:18px;color:#2e2e2e;letter-spacing:0.55px;font-weight:normal;">cache<span style="position:relative;top:-1.6px">_</span>dynamic<span style="position:relative;top:-1.6px">_</span>page<span style="position:relative;top:-1.6px">_</span>cache</div>
<svg style="left:131px;top:789.4px" width="24" height="24" viewBox="0 0 24 24"><defs><clipPath id="c159_813_4"><rect x="0" y="0" width="24" height="24" rx="4.0"/></clipPath></defs><g clip-path="url(#c159_813_4)"><rect x="0" y="0" width="24" height="5.60" fill="#1b76d4"/><rect x="0.00" y="5.50" width="7.70" height="6.30" fill="#e3f3ff"/><rect x="7.70" y="5.50" width="9.30" height="6.30" fill="#c3e4ff"/><rect x="17.00" y="5.50" width="7.00" height="6.30" fill="#a9d6fd"/><rect x="0.00" y="11.80" width="7.70" height="6.20" fill="#a7d3fb"/><rect x="7.70" y="11.80" width="9.30" height="6.20" fill="#8cc6f9"/><rect x="17.00" y="11.80" width="7.00" height="6.20" fill="#72b8f7"/><rect x="0.00" y="18.00" width="7.70" height="6.00" fill="#8fc5f8"/><rect x="7.70" y="18.00" width="9.30" height="6.00" fill="#6db3f4"/><rect x="17.00" y="18.00" width="7.00" height="6.00" fill="#3d9cf2"/></g></svg>
<div class="t" style="left:162px;top:791.40px;font-size:18px;color:#2e2e2e;letter-spacing:0.55px;font-weight:normal;">cache<span style="position:relative;top:-1.6px">_</span>entity</div>
<svg style="left:131px;top:822.5px" width="24" height="24" viewBox="0 0 24 24"><defs><clipPath id="c159_846_5"><rect x="0" y="0" width="24" height="24" rx="4.0"/></clipPath></defs><g clip-path="url(#c159_846_5)"><rect x="0" y="0" width="24" height="5.60" fill="#1b76d4"/><rect x="0.00" y="5.50" width="7.70" height="6.30" fill="#e3f3ff"/><rect x="7.70" y="5.50" width="9.30" height="6.30" fill="#c3e4ff"/><rect x="17.00" y="5.50" width="7.00" height="6.30" fill="#a9d6fd"/><rect x="0.00" y="11.80" width="7.70" height="6.20" fill="#a7d3fb"/><rect x="7.70" y="11.80" width="9.30" height="6.20" fill="#8cc6f9"/><rect x="17.00" y="11.80" width="7.00" height="6.20" fill="#72b8f7"/><rect x="0.00" y="18.00" width="7.70" height="6.00" fill="#8fc5f8"/><rect x="7.70" y="18.00" width="9.30" height="6.00" fill="#6db3f4"/><rect x="17.00" y="18.00" width="7.00" height="6.00" fill="#3d9cf2"/></g></svg>
<div class="t" style="left:162px;top:824.49px;font-size:18px;color:#2e2e2e;letter-spacing:0.55px;font-weight:normal;">cache<span style="position:relative;top:-1.6px">_</span>library</div>
<svg style="left:131px;top:855.6px" width="24" height="24" viewBox="0 0 24 24"><defs><clipPath id="c159_879_6"><rect x="0" y="0" width="24" height="24" rx="4.0"/></clipPath></defs><g clip-path="url(#c159_879_6)"><rect x="0" y="0" width="24" height="5.60" fill="#1b76d4"/><rect x="0.00" y="5.50" width="7.70" height="6.30" fill="#e3f3ff"/><rect x="7.70" y="5.50" width="9.30" height="6.30" fill="#c3e4ff"/><rect x="17.00" y="5.50" width="7.00" height="6.30" fill="#a9d6fd"/><rect x="0.00" y="11.80" width="7.70" height="6.20" fill="#a7d3fb"/><rect x="7.70" y="11.80" width="9.30" height="6.20" fill="#8cc6f9"/><rect x="17.00" y="11.80" width="7.00" height="6.20" fill="#72b8f7"/><rect x="0.00" y="18.00" width="7.70" height="6.00" fill="#8fc5f8"/><rect x="7.70" y="18.00" width="9.30" height="6.00" fill="#6db3f4"/><rect x="17.00" y="18.00" width="7.00" height="6.00" fill="#3d9cf2"/></g></svg>
<div class="t" style="left:162px;top:857.58px;font-size:18px;color:#2e2e2e;letter-spacing:0.55px;font-weight:normal;">cache<span style="position:relative;top:-1.6px">_</span>menu</div>
<svg style="left:131px;top:888.7px" width="24" height="24" viewBox="0 0 24 24"><defs><clipPath id="c159_912_7"><rect x="0" y="0" width="24" height="24" rx="4.0"/></clipPath></defs><g clip-path="url(#c159_912_7)"><rect x="0" y="0" width="24" height="5.60" fill="#1b76d4"/><rect x="0.00" y="5.50" width="7.70" height="6.30" fill="#e3f3ff"/><rect x="7.70" y="5.50" width="9.30" height="6.30" fill="#c3e4ff"/><rect x="17.00" y="5.50" width="7.00" height="6.30" fill="#a9d6fd"/><rect x="0.00" y="11.80" width="7.70" height="6.20" fill="#a7d3fb"/><rect x="7.70" y="11.80" width="9.30" height="6.20" fill="#8cc6f9"/><rect x="17.00" y="11.80" width="7.00" height="6.20" fill="#72b8f7"/><rect x="0.00" y="18.00" width="7.70" height="6.00" fill="#8fc5f8"/><rect x="7.70" y="18.00" width="9.30" height="6.00" fill="#6db3f4"/><rect x="17.00" y="18.00" width="7.00" height="6.00" fill="#3d9cf2"/></g></svg>
<div class="t" style="left:162px;top:890.67px;font-size:18px;color:#2e2e2e;letter-spacing:0.55px;font-weight:normal;">cache<span style="position:relative;top:-1.6px">_</span>page</div>
<svg style="left:131px;top:921.8px" width="24" height="24" viewBox="0 0 24 24"><defs><clipPath id="c159_945_8"><rect x="0" y="0" width="24" height="24" rx="4.0"/></clipPath></defs><g clip-path="url(#c159_945_8)"><rect x="0" y="0" width="24" height="5.60" fill="#1b76d4"/><rect x="0.00" y="5.50" width="7.70" height="6.30" fill="#e3f3ff"/><rect x="7.70" y="5.50" width="9.30" height="6.30" fill="#c3e4ff"/><rect x="17.00" y="5.50" width="7.00" height="6.30" fill="#a9d6fd"/><rect x="0.00" y="11.80" width="7.70" height="6.20" fill="#a7d3fb"/><rect x="7.70" y="11.80" width="9.30" height="6.20" fill="#8cc6f9"/><rect x="17.00" y="11.80" width="7.00" height="6.20" fill="#72b8f7"/><rect x="0.00" y="18.00" width="7.70" height="6.00" fill="#8fc5f8"/><rect x="7.70" y="18.00" width="9.30" height="6.00" fill="#6db3f4"/><rect x="17.00" y="18.00" width="7.00" height="6.00" fill="#3d9cf2"/></g></svg>
<div class="t" style="left:162px;top:923.76px;font-size:18px;color:#2e2e2e;letter-spacing:0.55px;font-weight:normal;">cache<span style="position:relative;top:-1.6px">_</span>render</div>
<svg style="left:131px;top:954.9px" width="24" height="24" viewBox="0 0 24 24"><defs><clipPath id="c159_978_9"><rect x="0" y="0" width="24" height="24" rx="4.0"/></clipPath></defs><g clip-path="url(#c159_978_9)"><rect x="0" y="0" width="24" height="5.60" fill="#1b76d4"/><rect x="0.00" y="5.50" width="7.70" height="6.30" fill="#e3f3ff"/><rect x="7.70" y="5.50" width="9.30" height="6.30" fill="#c3e4ff"/><rect x="17.00" y="5.50" width="7.00" height="6.30" fill="#a9d6fd"/><rect x="0.00" y="11.80" width="7.70" height="6.20" fill="#a7d3fb"/><rect x="7.70" y="11.80" width="9.30" height="6.20" fill="#8cc6f9"/><rect x="17.00" y="11.80" width="7.00" height="6.20" fill="#72b8f7"/><rect x="0.00" y="18.00" width="7.70" height="6.00" fill="#8fc5f8"/><rect x="7.70" y="18.00" width="9.30" height="6.00" fill="#6db3f4"/><rect x="17.00" y="18.00" width="7.00" height="6.00" fill="#3d9cf2"/></g></svg>
<div class="t" style="left:162px;top:956.85px;font-size:18px;color:#2e2e2e;letter-spacing:0.55px;font-weight:normal;">cache<span style="position:relative;top:-1.6px">_</span>rest</div>
<svg style="left:131px;top:988.0px" width="24" height="24" viewBox="0 0 24 24"><defs><clipPath id="c159_1012_0"><rect x="0" y="0" width="24" height="24" rx="4.0"/></clipPath></defs><g clip-path="url(#c159_1012_0)"><rect x="0" y="0" width="24" height="5.60" fill="#1b76d4"/><rect x="0.00" y="5.50" width="7.70" height="6.30" fill="#e3f3ff"/><rect x="7.70" y="5.50" width="9.30" height="6.30" fill="#c3e4ff"/><rect x="17.00" y="5.50" width="7.00" height="6.30" fill="#a9d6fd"/><rect x="0.00" y="11.80" width="7.70" height="6.20" fill="#a7d3fb"/><rect x="7.70" y="11.80" width="9.30" height="6.20" fill="#8cc6f9"/><rect x="17.00" y="11.80" width="7.00" height="6.20" fill="#72b8f7"/><rect x="0.00" y="18.00" width="7.70" height="6.00" fill="#8fc5f8"/><rect x="7.70" y="18.00" width="9.30" height="6.00" fill="#6db3f4"/><rect x="17.00" y="18.00" width="7.00" height="6.00" fill="#3d9cf2"/></g></svg>
<div class="t" style="left:162px;top:989.94px;font-size:18px;color:#2e2e2e;letter-spacing:0.55px;font-weight:normal;">cache<span style="position:relative;top:-1.6px">_</span>toolbar</div>
<svg style="left:131px;top:1021.0999999999999px" width="24" height="24" viewBox="0 0 24 24"><defs><clipPath id="c159_1045_1"><rect x="0" y="0" width="24" height="24" rx="4.0"/></clipPath></defs><g clip-path="url(#c159_1045_1)"><rect x="0" y="0" width="24" height="5.60" fill="#1b76d4"/><rect x="0.00" y="5.50" width="7.70" height="6.30" fill="#e3f3ff"/><rect x="7.70" y="5.50" width="9.30" height="6.30" fill="#c3e4ff"/><rect x="17.00" y="5.50" width="7.00" height="6.30" fill="#a9d6fd"/><rect x="0.00" y="11.80" width="7.70" height="6.20" fill="#a7d3fb"/><rect x="7.70" y="11.80" width="9.30" height="6.20" fill="#8cc6f9"/><rect x="17.00" y="11.80" width="7.00" height="6.20" fill="#72b8f7"/><rect x="0.00" y="18.00" width="7.70" height="6.00" fill="#8fc5f8"/><rect x="7.70" y="18.00" width="9.30" height="6.00" fill="#6db3f4"/><rect x="17.00" y="18.00" width="7.00" height="6.00" fill="#3d9cf2"/></g></svg>
<div class="t" style="left:162px;top:1023.03px;font-size:18px;color:#2e2e2e;letter-spacing:0.55px;font-weight:normal;">cachetags</div>
<svg style="left:131px;top:1054.2px" width="24" height="24" viewBox="0 0 24 24"><defs><clipPath id="c159_1078_2"><rect x="0" y="0" width="24" height="24" rx="4.0"/></clipPath></defs><g clip-path="url(#c159_1078_2)"><rect x="0" y="0" width="24" height="5.60" fill="#1b76d4"/><rect x="0.00" y="5.50" width="7.70" height="6.30" fill="#e3f3ff"/><rect x="7.70" y="5.50" width="9.30" height="6.30" fill="#c3e4ff"/><rect x="17.00" y="5.50" width="7.00" height="6.30" fill="#a9d6fd"/><rect x="0.00" y="11.80" width="7.70" height="6.20" fill="#a7d3fb"/><rect x="7.70" y="11.80" width="9.30" height="6.20" fill="#8cc6f9"/><rect x="17.00" y="11.80" width="7.00" height="6.20" fill="#72b8f7"/><rect x="0.00" y="18.00" width="7.70" height="6.00" fill="#8fc5f8"/><rect x="7.70" y="18.00" width="9.30" height="6.00" fill="#6db3f4"/><rect x="17.00" y="18.00" width="7.00" height="6.00" fill="#3d9cf2"/></g></svg>
<div class="t" style="left:162px;top:1056.12px;font-size:18px;color:#2e2e2e;letter-spacing:0.55px;font-weight:normal;">captcha<span style="position:relative;top:-1.6px">_</span>sessions</div>
<svg style="left:131px;top:1087.3px" width="24" height="24" viewBox="0 0 24 24"><defs><clipPath id="c159_1111_3"><rect x="0" y="0" width="24" height="24" rx="4.0"/></clipPath></defs><g clip-path="url(#c159_1111_3)"><rect x="0" y="0" width="24" height="5.60" fill="#1b76d4"/><rect x="0.00" y="5.50" width="7.70" height="6.30" fill="#e3f3ff"/><rect x="7.70" y="5.50" width="9.30" height="6.30" fill="#c3e4ff"/><rect x="17.00" y="5.50" width="7.00" height="6.30" fill="#a9d6fd"/><rect x="0.00" y="11.80" width="7.70" height="6.20" fill="#a7d3fb"/><rect x="7.70" y="11.80" width="9.30" height="6.20" fill="#8cc6f9"/><rect x="17.00" y="11.80" width="7.00" height="6.20" fill="#72b8f7"/><rect x="0.00" y="18.00" width="7.70" height="6.00" fill="#8fc5f8"/><rect x="7.70" y="18.00" width="9.30" height="6.00" fill="#6db3f4"/><rect x="17.00" y="18.00" width="7.00" height="6.00" fill="#3d9cf2"/></g></svg>
<div class="t" style="left:162px;top:1089.21px;font-size:18px;color:#2e2e2e;letter-spacing:0.55px;font-weight:normal;">comment</div>
<svg style="left:131px;top:1120.3px" width="24" height="24" viewBox="0 0 24 24"><defs><clipPath id="c159_1144_3"><rect x="0" y="0" width="24" height="24" rx="4.0"/></clipPath></defs><g clip-path="url(#c159_1144_3)"><rect x="0" y="0" width="24" height="5.60" fill="#1b76d4"/><rect x="0.00" y="5.50" width="7.70" height="6.30" fill="#e3f3ff"/><rect x="7.70" y="5.50" width="9.30" height="6.30" fill="#c3e4ff"/><rect x="17.00" y="5.50" width="7.00" height="6.30" fill="#a9d6fd"/><rect x="0.00" y="11.80" width="7.70" height="6.20" fill="#a7d3fb"/><rect x="7.70" y="11.80" width="9.30" height="6.20" fill="#8cc6f9"/><rect x="17.00" y="11.80" width="7.00" height="6.20" fill="#72b8f7"/><rect x="0.00" y="18.00" width="7.70" height="6.00" fill="#8fc5f8"/><rect x="7.70" y="18.00" width="9.30" height="6.00" fill="#6db3f4"/><rect x="17.00" y="18.00" width="7.00" height="6.00" fill="#3d9cf2"/></g></svg>
<div class="t" style="left:162px;top:1122.30px;font-size:18px;color:#2e2e2e;letter-spacing:0.55px;font-weight:normal;">comment<span style="position:relative;top:-1.6px">_</span><span style="position:relative;top:-1.6px">_</span>comment<span style="position:relative;top:-1.6px">_</span>body</div>
<svg style="left:131px;top:1153.4px" width="24" height="24" viewBox="0 0 24 24"><defs><clipPath id="c159_1177_4"><rect x="0" y="0" width="24" height="24" rx="4.0"/></clipPath></defs><g clip-path="url(#c159_1177_4)"><rect x="0" y="0" width="24" height="5.60" fill="#1b76d4"/><rect x="0.00" y="5.50" width="7.70" height="6.30" fill="#e3f3ff"/><rect x="7.70" y="5.50" width="9.30" height="6.30" fill="#c3e4ff"/><rect x="17.00" y="5.50" width="7.00" height="6.30" fill="#a9d6fd"/><rect x="0.00" y="11.80" width="7.70" height="6.20" fill="#a7d3fb"/><rect x="7.70" y="11.80" width="9.30" height="6.20" fill="#8cc6f9"/><rect x="17.00" y="11.80" width="7.00" height="6.20" fill="#72b8f7"/><rect x="0.00" y="18.00" width="7.70" height="6.00" fill="#8fc5f8"/><rect x="7.70" y="18.00" width="9.30" height="6.00" fill="#6db3f4"/><rect x="17.00" y="18.00" width="7.00" height="6.00" fill="#3d9cf2"/></g></svg>
<div class="t" style="left:162px;top:1155.39px;font-size:18px;color:#2e2e2e;letter-spacing:0.55px;font-weight:normal;">comment<span style="position:relative;top:-1.6px">_</span>entity<span style="position:relative;top:-1.6px">_</span>statistics</div>
<svg style="left:131px;top:1186.5px" width="24" height="24" viewBox="0 0 24 24"><defs><clipPath id="c159_1210_5"><rect x="0" y="0" width="24" height="24" rx="4.0"/></clipPath></defs><g clip-path="url(#c159_1210_5)"><rect x="0" y="0" width="24" height="5.60" fill="#1b76d4"/><rect x="0.00" y="5.50" width="7.70" height="6.30" fill="#e3f3ff"/><rect x="7.70" y="5.50" width="9.30" height="6.30" fill="#c3e4ff"/><rect x="17.00" y="5.50" width="7.00" height="6.30" fill="#a9d6fd"/><rect x="0.00" y="11.80" width="7.70" height="6.20" fill="#a7d3fb"/><rect x="7.70" y="11.80" width="9.30" height="6.20" fill="#8cc6f9"/><rect x="17.00" y="11.80" width="7.00" height="6.20" fill="#72b8f7"/><rect x="0.00" y="18.00" width="7.70" height="6.00" fill="#8fc5f8"/><rect x="7.70" y="18.00" width="9.30" height="6.00" fill="#6db3f4"/><rect x="17.00" y="18.00" width="7.00" height="6.00" fill="#3d9cf2"/></g></svg>
<div class="t" style="left:162px;top:1188.48px;font-size:18px;color:#2e2e2e;letter-spacing:0.55px;font-weight:normal;">comment<span style="position:relative;top:-1.6px">_</span>field<span style="position:relative;top:-1.6px">_</span>data</div>
<svg style="left:131px;top:1219.6px" width="24" height="24" viewBox="0 0 24 24"><defs><clipPath id="c159_1243_6"><rect x="0" y="0" width="24" height="24" rx="4.0"/></clipPath></defs><g clip-path="url(#c159_1243_6)"><rect x="0" y="0" width="24" height="5.60" fill="#1b76d4"/><rect x="0.00" y="5.50" width="7.70" height="6.30" fill="#e3f3ff"/><rect x="7.70" y="5.50" width="9.30" height="6.30" fill="#c3e4ff"/><rect x="17.00" y="5.50" width="7.00" height="6.30" fill="#a9d6fd"/><rect x="0.00" y="11.80" width="7.70" height="6.20" fill="#a7d3fb"/><rect x="7.70" y="11.80" width="9.30" height="6.20" fill="#8cc6f9"/><rect x="17.00" y="11.80" width="7.00" height="6.20" fill="#72b8f7"/><rect x="0.00" y="18.00" width="7.70" height="6.00" fill="#8fc5f8"/><rect x="7.70" y="18.00" width="9.30" height="6.00" fill="#6db3f4"/><rect x="17.00" y="18.00" width="7.00" height="6.00" fill="#3d9cf2"/></g></svg>
<div class="t" style="left:162px;top:1221.57px;font-size:18px;color:#2e2e2e;letter-spacing:0.55px;font-weight:normal;">config</div>
<svg style="left:131px;top:1252.7px" width="24" height="24" viewBox="0 0 24 24"><defs><clipPath id="c159_1276_7"><rect x="0" y="0" width="24" height="24" rx="4.0"/></clipPath></defs><g clip-path="url(#c159_1276_7)"><rect x="0" y="0" width="24" height="5.60" fill="#1b76d4"/><rect x="0.00" y="5.50" width="7.70" height="6.30" fill="#e3f3ff"/><rect x="7.70" y="5.50" width="9.30" height="6.30" fill="#c3e4ff"/><rect x="17.00" y="5.50" width="7.00" height="6.30" fill="#a9d6fd"/><rect x="0.00" y="11.80" width="7.70" height="6.20" fill="#a7d3fb"/><rect x="7.70" y="11.80" width="9.30" height="6.20" fill="#8cc6f9"/><rect x="17.00" y="11.80" width="7.00" height="6.20" fill="#72b8f7"/><rect x="0.00" y="18.00" width="7.70" height="6.00" fill="#8fc5f8"/><rect x="7.70" y="18.00" width="9.30" height="6.00" fill="#6db3f4"/><rect x="17.00" y="18.00" width="7.00" height="6.00" fill="#3d9cf2"/></g></svg>
<div class="t" style="left:162px;top:1254.66px;font-size:18px;color:#2e2e2e;letter-spacing:0.55px;font-weight:normal;">config<span style="position:relative;top:-1.6px">_</span>export</div>
<svg style="left:131px;top:1285.8px" width="24" height="24" viewBox="0 0 24 24"><defs><clipPath id="c159_1309_8"><rect x="0" y="0" width="24" height="24" rx="4.0"/></clipPath></defs><g clip-path="url(#c159_1309_8)"><rect x="0" y="0" width="24" height="5.60" fill="#1b76d4"/><rect x="0.00" y="5.50" width="7.70" height="6.30" fill="#e3f3ff"/><rect x="7.70" y="5.50" width="9.30" height="6.30" fill="#c3e4ff"/><rect x="17.00" y="5.50" width="7.00" height="6.30" fill="#a9d6fd"/><rect x="0.00" y="11.80" width="7.70" height="6.20" fill="#a7d3fb"/><rect x="7.70" y="11.80" width="9.30" height="6.20" fill="#8cc6f9"/><rect x="17.00" y="11.80" width="7.00" height="6.20" fill="#72b8f7"/><rect x="0.00" y="18.00" width="7.70" height="6.00" fill="#8fc5f8"/><rect x="7.70" y="18.00" width="9.30" height="6.00" fill="#6db3f4"/><rect x="17.00" y="18.00" width="7.00" height="6.00" fill="#3d9cf2"/></g></svg>
<div class="t" style="left:162px;top:1287.75px;font-size:18px;color:#2e2e2e;letter-spacing:0.55px;font-weight:normal;">field<span style="position:relative;top:-1.6px">_</span>deleted<span style="position:relative;top:-1.6px">_</span>data<span style="position:relative;top:-1.6px">_</span>2be37e30f1</div>
<svg style="left:131px;top:1318.9px" width="24" height="24" viewBox="0 0 24 24"><defs><clipPath id="c159_1342_9"><rect x="0" y="0" width="24" height="24" rx="4.0"/></clipPath></defs><g clip-path="url(#c159_1342_9)"><rect x="0" y="0" width="24" height="5.60" fill="#1b76d4"/><rect x="0.00" y="5.50" width="7.70" height="6.30" fill="#e3f3ff"/><rect x="7.70" y="5.50" width="9.30" height="6.30" fill="#c3e4ff"/><rect x="17.00" y="5.50" width="7.00" height="6.30" fill="#a9d6fd"/><rect x="0.00" y="11.80" width="7.70" height="6.20" fill="#a7d3fb"/><rect x="7.70" y="11.80" width="9.30" height="6.20" fill="#8cc6f9"/><rect x="17.00" y="11.80" width="7.00" height="6.20" fill="#72b8f7"/><rect x="0.00" y="18.00" width="7.70" height="6.00" fill="#8fc5f8"/><rect x="7.70" y="18.00" width="9.30" height="6.00" fill="#6db3f4"/><rect x="17.00" y="18.00" width="7.00" height="6.00" fill="#3d9cf2"/></g></svg>
<div class="t" style="left:162px;top:1320.84px;font-size:18px;color:#2e2e2e;letter-spacing:0.55px;font-weight:normal;">field<span style="position:relative;top:-1.6px">_</span>deleted<span style="position:relative;top:-1.6px">_</span>data<span style="position:relative;top:-1.6px">_</span>4da3df120e</div>
<div class="a" style="left:0px;top:1344px;width:523px;height:41px;background:#e8e8e8"></div>
<div class="a" style="left:41px;top:1346px;width:465px;height:30.4px;background:#fff;border-radius:6.5px;box-shadow:0 0.5px 1.5px rgba(0,0,0,0.28)"></div>
<svg style="left:50px;top:1352px" width="20" height="20" viewBox="0 0 20 20"><circle cx="8.8" cy="6.9" r="6.6" fill="none" stroke="#262626" stroke-width="1.9"/><path d="M13.9 12 L19 17.2" stroke="#262626" stroke-width="2.1" stroke-linecap="round"/></svg>
<div class="t" style="left:82px;top:1351.92px;font-size:19px;color:#b4b4b4;letter-spacing:0.4px;font-weight:normal;">Search</div>
<svg style="left:13px;top:1348px" width="13" height="26" viewBox="0 0 13 26"><g fill="none" stroke="#3a3a3a" stroke-width="1.7"><path d="M6.7 0.6 V3.6 M6.7 20.6 V24.6 M5.6 12.6 V13.9 M8.2 12.6 V13.9"/><path d="M1.8 10.2 V8.8 C1.8 5.7 4 3.7 6.7 3.7 C9.4 3.7 11.7 5.7 11.7 8.8 V10.2 Z"/><path d="M1.8 13.9 V15.2 C1.8 18.4 4 20.6 6.7 20.6 C9.4 20.6 11.7 18.4 11.7 15.2 V13.9 Z"/></g></svg>
<div class="a" style="left:524px;top:43px;width:1753px;height:44px;background:#ebebeb"></div>
<div class="a" style="left:524px;top:43px;width:139px;height:44px;background:#f3f3f3"></div>
<div class="a" style="left:663px;top:43px;width:1px;height:44px;background:#c9c9c9"></div>
<div class="a" style="left:664px;top:43px;width:330px;height:44px;background:#ffffff"></div>
<div class="a" style="left:994px;top:43px;width:1px;height:44px;background:#cfcfcf"></div>
<div class="t" style="left:561px;top:56.26px;font-size:18px;color:#808080;letter-spacing:0.5px;font-weight:normal;">Objects</div>
<svg style="left:717px;top:53px" width="24" height="24" viewBox="0 0 24 24"><defs><clipPath id="c745_77"><rect x="0" y="0" width="24" height="24" rx="4.0"/></clipPath></defs><g clip-path="url(#c745_77)"><rect x="0" y="0" width="24" height="5.60" fill="#1b76d4"/><rect x="0.00" y="5.50" width="7.70" height="6.30" fill="#e3f3ff"/><rect x="7.70" y="5.50" width="9.30" height="6.30" fill="#c3e4ff"/><rect x="17.00" y="5.50" width="7.00" height="6.30" fill="#a9d6fd"/><rect x="0.00" y="11.80" width="7.70" height="6.20" fill="#a7d3fb"/><rect x="7.70" y="11.80" width="9.30" height="6.20" fill="#8cc6f9"/><rect x="17.00" y="11.80" width="7.00" height="6.20" fill="#72b8f7"/><rect x="0.00" y="18.00" width="7.70" height="6.00" fill="#8fc5f8"/><rect x="7.70" y="18.00" width="9.30" height="6.00" fill="#6db3f4"/><rect x="17.00" y="18.00" width="7.00" height="6.00" fill="#3d9cf2"/></g></svg>
<div class="t" style="left:749px;top:56.26px;font-size:18px;color:#6e6e6e;letter-spacing:0.5px;font-weight:normal;">watchdog@db (DDEV)</div>
<div class="a" style="left:524px;top:87px;width:1753px;height:55px;background:#ffffff"></div>
<div class="a" style="left:524px;top:142px;width:1753px;height:1px;background:#a8a8a8"></div>
<svg style="left:549.5px;top:105px" width="26" height="26" viewBox="0 0 26 26"><g fill="none" stroke="#6e6e6e" stroke-width="1.6" stroke-linecap="round"><ellipse cx="9" cy="4.2" rx="8.2" ry="3.3"/><path d="M0.8 4.2 V16.8 A8.2 3.3 0 0 0 12 19.9"/><path d="M17.2 4.2 V9"/><path d="M0.8 8.6 A8.2 3.3 0 0 0 17.2 8.6"/><path d="M0.8 12.8 A8.2 3.3 0 0 0 12 15.9"/></g><path d="M15.6 13.4 L23.2 18.4 L15.6 23.4 Z" fill="#fff" stroke="#3b8de3" stroke-width="1.8" stroke-linejoin="round"/></svg>
<svg style="left:602.5px;top:105px" width="26" height="26" viewBox="0 0 26 26"><g fill="none" stroke="#c4c4c4" stroke-width="1.6" stroke-linecap="round"><ellipse cx="9" cy="4.2" rx="8.2" ry="3.3"/><path d="M0.8 4.2 V16.8 A8.2 3.3 0 0 0 12 19.9"/><path d="M17.2 4.2 V9"/><path d="M0.8 8.6 A8.2 3.3 0 0 0 17.2 8.6"/><path d="M0.8 12.8 A8.2 3.3 0 0 0 12 15.9"/></g><path d="M10.6 18.6 L14 22.2 L21.4 14.2" fill="none" stroke="#a9cbef" stroke-width="1.7" stroke-linecap="round" stroke-linejoin="round"/></svg>
<svg style="left:656px;top:105px" width="26" height="26" viewBox="0 0 26 26"><g fill="none" stroke="#c4c4c4" stroke-width="1.6" stroke-linecap="round"><ellipse cx="9" cy="4.2" rx="8.2" ry="3.3"/><path d="M0.8 4.2 V16.8 A8.2 3.3 0 0 0 12 19.9"/><path d="M17.2 4.2 V9"/><path d="M0.8 8.6 A8.2 3.3 0 0 0 17.2 8.6"/><path d="M0.8 12.8 A8.2 3.3 0 0 0 12 15.9"/></g><path d="M9.2 18.6 A5.6 5.6 0 1 1 14.2 24" fill="none" stroke="#a9cbef" stroke-width="1.6" stroke-linecap="round"/><path d="M6.4 16.6 L9.2 19.6 L12.4 17.4" fill="none" stroke="#a9cbef" stroke-width="1.6" stroke-linecap="round" stroke-linejoin="round"/></svg>
<div class="a" style="left:705.5px;top:101px;width:1.5px;height:30px;background:#dcdcdc"></div>
<svg style="left:741px;top:105px" width="34" height="26" viewBox="0 0 34 26"><path d="M4 1 H12.6 L18 6.4 V20.6 A3 3 0 0 1 15 23.6 H4 A3 3 0 0 1 1 20.6 V4 A3 3 0 0 1 4 1 Z" fill="none" stroke="#6e6e6e" stroke-width="1.6" stroke-linejoin="round"/><path d="M12.6 1 V4 A2.4 2.4 0 0 0 15 6.4 H18" fill="none" stroke="#6e6e6e" stroke-width="1.4"/><path d="M4 10 H9.6 M4 13.1 H14.6 M4 16.2 H11.6 M4 19.3 H14.6" stroke="#3b8de3" stroke-width="1.5"/><path d="M23.2 17 H30.4 L26.8 21.2 Z" fill="#3b8de3"/></svg>
<svg style="left:808px;top:106px" width="24" height="24" viewBox="0 0 24 24"><path d="M3.2 1.2 H18.4 A2.2 2.2 0 0 1 20.2 4.6 L13.2 12.8 V17.6 L7.6 22.6 V12.8 L1 4.6 A2.2 2.2 0 0 1 3.2 1.2 Z" fill="none" stroke="#6e6e6e" stroke-width="1.6" stroke-linejoin="round"/><path d="M2.4 4.8 H16.8" stroke="#3b8de3" stroke-width="1.5"/></svg>
<svg style="left:859px;top:105px" width="26" height="26" viewBox="0 0 26 26"><path d="M6.2 1.2 V23.2 M1.6 18.4 L6.2 23.4 L10.8 18.4" fill="none" stroke="#3b8de3" stroke-width="1.7" stroke-linecap="round" stroke-linejoin="round"/><path d="M12 2.6 H24.4 M12 8.6 H24.4 M15 14.4 H24.4 M15 20.4 H24.4" stroke="#6e6e6e" stroke-width="1.6"/></svg>
<svg style="left:912px;top:105px" width="26" height="26" viewBox="0 0 26 26"><rect x="1" y="1" width="22.4" height="23" rx="2.6" fill="none" stroke="#6e6e6e" stroke-width="1.6"/><path d="M1 8.6 H23.4 M1 16.7 H23.4" stroke="#6e6e6e" stroke-width="1.6"/><path d="M9 1 V24 M16.6 1 V24" stroke="#3b8de3" stroke-width="1.6"/></svg>
<div class="a" style="left:962.5px;top:101px;width:1.5px;height:30px;background:#dcdcdc"></div>
<svg style="left:989px;top:106px" width="26" height="24" viewBox="0 0 26 24"><path d="M19 7.4 V5 A4 4 0 0 0 15 1 H5 A4 4 0 0 0 1 5 V17.8 A4 4 0 0 0 5 21.8 H6.6" fill="none" stroke="#6e6e6e" stroke-width="1.6" stroke-linecap="round"/><path d="M21.2 21.6 C21.2 16 17 13.4 9.4 13.4 M13.4 9.4 L9.2 13.6 L13.4 17.8" fill="none" stroke="#5db546" stroke-width="1.7" stroke-linecap="round" stroke-linejoin="round"/></svg>
<svg style="left:1041px;top:106px" width="26" height="24" viewBox="0 0 26 24"><path d="M19 7.4 V5 A4 4 0 0 0 15 1 H5 A4 4 0 0 0 1 5 V17.8 A4 4 0 0 0 5 21.8 H6.6" fill="none" stroke="#6e6e6e" stroke-width="1.6" stroke-linecap="round"/><path d="M9.6 11 C10 15.8 14 17.6 21.4 17.6 M17.4 13.4 L21.6 17.6 L17.4 21.8" fill="none" stroke="#f0a23e" stroke-width="1.7" stroke-linecap="round" stroke-linejoin="round"/></svg>
<svg style="left:1093.5px;top:105px" width="26" height="26" viewBox="0 0 26 26"><g fill="none" stroke="#6e6e6e" stroke-width="1.6" stroke-linecap="round"><ellipse cx="9" cy="4.2" rx="8.2" ry="3.3"/><path d="M0.8 4.2 V16.8 A8.2 3.3 0 0 0 17.2 16.8 V4.2"/><path d="M0.8 8.6 A8.2 3.3 0 0 0 17.2 8.6"/><path d="M0.8 12.8 A8.2 3.3 0 0 0 17.2 12.8"/></g><rect x="8.6" y="8.2" width="16" height="15.8" rx="2.6" fill="#3b8de3"/><text x="16.6" y="15" font-family="Liberation Sans" font-weight="bold" font-size="7.4" fill="#fff" text-anchor="middle">101</text><text x="16.6" y="22.4" font-family="Liberation Sans" font-weight="bold" font-size="6.6" fill="#fff" text-anchor="middle">ABC</text></svg>
<svg style="left:1147px;top:105px" width="26" height="26" viewBox="0 0 26 26"><g fill="#e6f3ff" stroke="#3b8de3" stroke-width="1.5"><rect x="1.6" y="7.6" width="3.6" height="11.6" rx="1.8"/><rect x="7.8" y="1.6" width="3.4" height="14.6" rx="1.7"/><rect x="13.8" y="10.6" width="3.4" height="13.4" rx="1.7"/><rect x="19.8" y="5.8" width="3.4" height="13.6" rx="1.7"/></g></svg>
<div class="a" style="left:524px;top:143px;width:1753px;height:1200px;background:#ffffff"></div>
<div class="a" style="left:524px;top:183px;width:1750px;height:1159px;overflow:hidden">
<div class="a" style="left:0;top:-12.97px;width:1760px;height:25px;background:#f3f6fc"></div>
<div class="a" style="left:0;top:72.80px;width:1760px;height:25px;background:#f8f8f8"></div>
<div class="a" style="left:0;top:158.57px;width:1760px;height:25px;background:#f3f6fc"></div>
<div class="a" style="left:0;top:244.34px;width:1760px;height:25px;background:#f8f8f8"></div>
<div class="a" style="left:0;top:330.11px;width:1760px;height:25px;background:#f3f6fc"></div>
<div class="a" style="left:0;top:415.88px;width:1760px;height:25px;background:#f8f8f8"></div>
<div class="a" style="left:0;top:501.65px;width:1760px;height:25px;background:#f3f6fc"></div>
<div class="a" style="left:0;top:587.42px;width:1760px;height:25px;background:#f8f8f8"></div>
<div class="a" style="left:0;top:673.19px;width:1760px;height:25px;background:#f3f6fc"></div>
<div class="a" style="left:0;top:758.96px;width:1760px;height:25px;background:#f8f8f8"></div>
<div class="a" style="left:0;top:844.73px;width:1760px;height:25px;background:#f3f6fc"></div>
<div class="a" style="left:0;top:930.50px;width:1760px;height:25px;background:#f8f8f8"></div>
<div class="a" style="left:0;top:1016.27px;width:1760px;height:25px;background:#f3f6fc"></div>
<div class="a" style="left:0;top:1102.04px;width:1760px;height:25px;background:#f8f8f8"></div>
<div class="a" style="left:30px;top:0;width:2px;height:1200px;background:#e6e6e6"></div>
<div class="a" style="left:141.39999999999998px;top:0;width:1.5px;height:1200px;background:#e6e6e6"></div>
<div class="a" style="left:249.29999999999995px;top:0;width:1.5px;height:1200px;background:#e6e6e6"></div>
<div class="a" style="left:386.79999999999995px;top:0;width:1.5px;height:1200px;background:#e6e6e6"></div>
<div class="a" style="left:1610.6px;top:0;width:1.5px;height:1200px;background:#e6e6e6"></div>
<div class="t" style="right:1617px;top:-5.38px;font-size:17.5px;color:#333333;letter-spacing:0.1px">1042186</div>
<div class="t" style="right:1509px;top:-5.38px;font-size:17.5px;color:#333333;letter-spacing:0.1px">0</div>
<div class="t" style="left:260.6px;top:-5.38px;font-size:17.5px;color:#333333;letter-spacing:0.1px">cron</div>
<div class="t" style="left:398px;top:-5.38px;font-size:17.5px;color:#333333;letter-spacing:0.1px">Starting execution of @module<span style="position:relative;top:-1.6px">_</span>cron(), execution of @module<span style="position:relative;top:-1.6px">_</span>previous<span style="position:relative;top:-1.6px">_</span>cron() took @time.</div>
<div class="t" style="left:1622px;top:-5.38px;font-size:17.5px;color:#a3a3a3;letter-spacing:0.1px">(BLOB) 97 bytes</div>
<div class="t" style="right:1617px;top:23.21px;font-size:17.5px;color:#333333;letter-spacing:0.1px">1042187</div>
<div class="t" style="right:1509px;top:23.21px;font-size:17.5px;color:#333333;letter-spacing:0.1px">0</div>
<div class="t" style="left:260.6px;top:23.21px;font-size:17.5px;color:#333333;letter-spacing:0.1px">cron</div>
<div class="t" style="left:398px;top:23.21px;font-size:17.5px;color:#333333;letter-spacing:0.1px">Starting execution of @module<span style="position:relative;top:-1.6px">_</span>cron(), execution of @module<span style="position:relative;top:-1.6px">_</span>previous<span style="position:relative;top:-1.6px">_</span>cron() took @time.</div>
<div class="t" style="left:1622px;top:23.21px;font-size:17.5px;color:#a3a3a3;letter-spacing:0.1px">(BLOB) 106 byte</div>
<div class="t" style="right:1617px;top:51.80px;font-size:17.5px;color:#333333;letter-spacing:0.1px">1042188</div>
<div class="t" style="right:1509px;top:51.80px;font-size:17.5px;color:#333333;letter-spacing:0.1px">0</div>
<div class="t" style="left:260.6px;top:51.80px;font-size:17.5px;color:#333333;letter-spacing:0.1px">cron</div>
<div class="t" style="left:398px;top:51.80px;font-size:17.5px;color:#333333;letter-spacing:0.1px">Execution of @module<span style="position:relative;top:-1.6px">_</span>previous<span style="position:relative;top:-1.6px">_</span>cron() took @time.</div>
<div class="t" style="left:1622px;top:51.80px;font-size:17.5px;color:#a3a3a3;letter-spacing:0.1px">(BLOB) 78 bytes</div>
<div class="t" style="right:1617px;top:80.39px;font-size:17.5px;color:#333333;letter-spacing:0.1px">1042189</div>
<div class="t" style="right:1509px;top:80.39px;font-size:17.5px;color:#333333;letter-spacing:0.1px">0</div>
<div class="t" style="left:260.6px;top:80.39px;font-size:17.5px;color:#333333;letter-spacing:0.1px">type</div>
<div class="t" style="left:398px;top:80.39px;font-size:17.5px;color:#333333;letter-spacing:0.1px">SMS system: please, go here: /admin/config/system/smssystem/api and add all necessary configs or you won&#x27;t be able to use the system.</div>
<div class="t" style="left:1622px;top:80.39px;font-size:17.5px;color:#a3a3a3;letter-spacing:0.1px">(BLOB) 6 bytes</div>
<div class="t" style="right:1617px;top:108.98px;font-size:17.5px;color:#333333;letter-spacing:0.1px">1042190</div>
<div class="t" style="right:1509px;top:108.98px;font-size:17.5px;color:#333333;letter-spacing:0.1px">0</div>
<div class="t" style="left:260.6px;top:108.98px;font-size:17.5px;color:#333333;letter-spacing:0.1px">cron</div>
<div class="t" style="left:398px;top:108.98px;font-size:17.5px;color:#333333;letter-spacing:0.1px">Cron run completed.</div>
<div class="t" style="left:1622px;top:108.98px;font-size:17.5px;color:#a3a3a3;letter-spacing:0.1px">(BLOB) 6 bytes</div>
<div class="t" style="right:1617px;top:137.57px;font-size:17.5px;color:#333333;letter-spacing:0.1px">1042191</div>
<div class="t" style="right:1509px;top:137.57px;font-size:17.5px;color:#333333;letter-spacing:0.1px">1</div>
<div class="t" style="left:260.6px;top:137.57px;font-size:17.5px;color:#333333;letter-spacing:0.1px">webform</div>
<div class="t" style="left:398px;top:137.57px;font-size:17.5px;color:#333333;letter-spacing:0.1px">Webform settings @label has been saved.</div>
<div class="t" style="left:1622px;top:137.57px;font-size:17.5px;color:#a3a3a3;letter-spacing:0.1px">(BLOB) 59 bytes</div>
<div class="t" style="right:1617px;top:166.16px;font-size:17.5px;color:#333333;letter-spacing:0.1px">1042192</div>
<div class="t" style="right:1509px;top:166.16px;font-size:17.5px;color:#333333;letter-spacing:0.1px">1</div>
<div class="t" style="left:260.6px;top:166.16px;font-size:17.5px;color:#333333;letter-spacing:0.1px">webform</div>
<div class="t" style="left:398px;top:166.16px;font-size:17.5px;color:#333333;letter-spacing:0.1px">Webform settings @label has been saved.</div>
<div class="t" style="left:1622px;top:166.16px;font-size:17.5px;color:#a3a3a3;letter-spacing:0.1px">(BLOB) 59 bytes</div>
<div class="t" style="right:1617px;top:194.75px;font-size:17.5px;color:#333333;letter-spacing:0.1px">1042193</div>
<div class="t" style="right:1509px;top:194.75px;font-size:17.5px;color:#333333;letter-spacing:0.1px">1</div>
<div class="t" style="left:260.6px;top:194.75px;font-size:17.5px;color:#333333;letter-spacing:0.1px">webform</div>
<div class="t" style="left:398px;top:194.75px;font-size:17.5px;color:#333333;letter-spacing:0.1px">Webform settings @label has been saved.</div>
<div class="t" style="left:1622px;top:194.75px;font-size:17.5px;color:#a3a3a3;letter-spacing:0.1px">(BLOB) 59 bytes</div>
<div class="t" style="right:1617px;top:223.34px;font-size:17.5px;color:#333333;letter-spacing:0.1px">1042194</div>
<div class="t" style="right:1509px;top:223.34px;font-size:17.5px;color:#333333;letter-spacing:0.1px">0</div>
<div class="t" style="left:260.6px;top:223.34px;font-size:17.5px;color:#333333;letter-spacing:0.1px">cron</div>
<div class="t" style="left:398px;top:223.34px;font-size:17.5px;color:#333333;letter-spacing:0.1px">Starting execution of @module<span style="position:relative;top:-1.6px">_</span>cron().</div>
<div class="t" style="left:1622px;top:223.34px;font-size:17.5px;color:#a3a3a3;letter-spacing:0.1px">(BLOB) 34 bytes</div>
<div class="t" style="right:1617px;top:251.93px;font-size:17.5px;color:#333333;letter-spacing:0.1px">1042195</div>
<div class="t" style="right:1509px;top:251.93px;font-size:17.5px;color:#333333;letter-spacing:0.1px">0</div>
<div class="t" style="left:260.6px;top:251.93px;font-size:17.5px;color:#333333;letter-spacing:0.1px">cron</div>
<div class="t" style="left:398px;top:251.93px;font-size:17.5px;color:#333333;letter-spacing:0.1px">Starting execution of @module<span style="position:relative;top:-1.6px">_</span>cron(), execution of @module<span style="position:relative;top:-1.6px">_</span>previous<span style="position:relative;top:-1.6px">_</span>cron() took @time.</div>
<div class="t" style="left:1622px;top:251.93px;font-size:17.5px;color:#a3a3a3;letter-spacing:0.1px">(BLOB) 96 bytes</div>
<div class="t" style="right:1617px;top:280.52px;font-size:17.5px;color:#333333;letter-spacing:0.1px">1042196</div>
<div class="t" style="right:1509px;top:280.52px;font-size:17.5px;color:#333333;letter-spacing:0.1px">0</div>
<div class="t" style="left:260.6px;top:280.52px;font-size:17.5px;color:#333333;letter-spacing:0.1px">cron</div>
<div class="t" style="left:398px;top:280.52px;font-size:17.5px;color:#333333;letter-spacing:0.1px">Starting execution of @module<span style="position:relative;top:-1.6px">_</span>cron(), execution of @module<span style="position:relative;top:-1.6px">_</span>previous<span style="position:relative;top:-1.6px">_</span>cron() took @time.</div>
<div class="t" style="left:1622px;top:280.52px;font-size:17.5px;color:#a3a3a3;letter-spacing:0.1px">(BLOB) 95 bytes</div>
<div class="t" style="right:1617px;top:309.11px;font-size:17.5px;color:#333333;letter-spacing:0.1px">1042197</div>
<div class="t" style="right:1509px;top:309.11px;font-size:17.5px;color:#333333;letter-spacing:0.1px">0</div>
<div class="t" style="left:260.6px;top:309.11px;font-size:17.5px;color:#333333;letter-spacing:0.1px">cron</div>
<div class="t" style="left:398px;top:309.11px;font-size:17.5px;color:#333333;letter-spacing:0.1px">Starting execution of @module<span style="position:relative;top:-1.6px">_</span>cron(), execution of @module<span style="position:relative;top:-1.6px">_</span>previous<span style="position:relative;top:-1.6px">_</span>cron() took @time.</div>
<div class="t" style="left:1622px;top:309.11px;font-size:17.5px;color:#a3a3a3;letter-spacing:0.1px">(BLOB) 93 bytes</div>
<div class="t" style="right:1617px;top:337.70px;font-size:17.5px;color:#333333;letter-spacing:0.1px">1042198</div>
<div class="t" style="right:1509px;top:337.70px;font-size:17.5px;color:#333333;letter-spacing:0.1px">0</div>
<div class="t" style="left:260.6px;top:337.70px;font-size:17.5px;color:#333333;letter-spacing:0.1px">cron</div>
<div class="t" style="left:398px;top:337.70px;font-size:17.5px;color:#333333;letter-spacing:0.1px">Starting execution of @module<span style="position:relative;top:-1.6px">_</span>cron(), execution of @module<span style="position:relative;top:-1.6px">_</span>previous<span style="position:relative;top:-1.6px">_</span>cron() took @time.</div>
<div class="t" style="left:1622px;top:337.70px;font-size:17.5px;color:#a3a3a3;letter-spacing:0.1px">(BLOB) 92 bytes</div>
<div class="t" style="right:1617px;top:366.29px;font-size:17.5px;color:#333333;letter-spacing:0.1px">1042199</div>
<div class="t" style="right:1509px;top:366.29px;font-size:17.5px;color:#333333;letter-spacing:0.1px">0</div>
<div class="t" style="left:260.6px;top:366.29px;font-size:17.5px;color:#333333;letter-spacing:0.1px">cron</div>
<div class="t" style="left:398px;top:366.29px;font-size:17.5px;color:#333333;letter-spacing:0.1px">Starting execution of @module<span style="position:relative;top:-1.6px">_</span>cron(), execution of @module<span style="position:relative;top:-1.6px">_</span>previous<span style="position:relative;top:-1.6px">_</span>cron() took @time.</div>
<div class="t" style="left:1622px;top:366.29px;font-size:17.5px;color:#a3a3a3;letter-spacing:0.1px">(BLOB) 104 byte</div>
<div class="t" style="right:1617px;top:394.88px;font-size:17.5px;color:#333333;letter-spacing:0.1px">1042200</div>
<div class="t" style="right:1509px;top:394.88px;font-size:17.5px;color:#333333;letter-spacing:0.1px">0</div>
<div class="t" style="left:260.6px;top:394.88px;font-size:17.5px;color:#333333;letter-spacing:0.1px">cron</div>
<div class="t" style="left:398px;top:394.88px;font-size:17.5px;color:#333333;letter-spacing:0.1px">Starting execution of @module<span style="position:relative;top:-1.6px">_</span>cron(), execution of @module<span style="position:relative;top:-1.6px">_</span>previous<span style="position:relative;top:-1.6px">_</span>cron() took @time.</div>
<div class="t" style="left:1622px;top:394.88px;font-size:17.5px;color:#a3a3a3;letter-spacing:0.1px">(BLOB) 107 byte</div>
<div class="t" style="right:1617px;top:423.47px;font-size:17.5px;color:#333333;letter-spacing:0.1px">1042201</div>
<div class="t" style="right:1509px;top:423.47px;font-size:17.5px;color:#333333;letter-spacing:0.1px">0</div>
<div class="t" style="left:260.6px;top:423.47px;font-size:17.5px;color:#333333;letter-spacing:0.1px">cron</div>
<div class="t" style="left:398px;top:423.47px;font-size:17.5px;color:#333333;letter-spacing:0.1px">Starting execution of @module<span style="position:relative;top:-1.6px">_</span>cron(), execution of @module<span style="position:relative;top:-1.6px">_</span>previous<span style="position:relative;top:-1.6px">_</span>cron() took @time.</div>
<div class="t" style="left:1622px;top:423.47px;font-size:17.5px;color:#a3a3a3;letter-spacing:0.1px">(BLOB) 98 bytes</div>
<div class="t" style="right:1617px;top:452.06px;font-size:17.5px;color:#333333;letter-spacing:0.1px">1042202</div>
<div class="t" style="right:1509px;top:452.06px;font-size:17.5px;color:#333333;letter-spacing:0.1px">0</div>
<div class="t" style="left:260.6px;top:452.06px;font-size:17.5px;color:#333333;letter-spacing:0.1px">cron</div>
<div class="t" style="left:398px;top:452.06px;font-size:17.5px;color:#333333;letter-spacing:0.1px">Starting execution of @module<span style="position:relative;top:-1.6px">_</span>cron(), execution of @module<span style="position:relative;top:-1.6px">_</span>previous<span style="position:relative;top:-1.6px">_</span>cron() took @time.</div>
<div class="t" style="left:1622px;top:452.06px;font-size:17.5px;color:#a3a3a3;letter-spacing:0.1px">(BLOB) 95 bytes</div>
<div class="t" style="right:1617px;top:480.65px;font-size:17.5px;color:#333333;letter-spacing:0.1px">1042203</div>
<div class="t" style="right:1509px;top:480.65px;font-size:17.5px;color:#333333;letter-spacing:0.1px">0</div>
<div class="t" style="left:260.6px;top:480.65px;font-size:17.5px;color:#333333;letter-spacing:0.1px">cron</div>
<div class="t" style="left:398px;top:480.65px;font-size:17.5px;color:#333333;letter-spacing:0.1px">Starting execution of @module<span style="position:relative;top:-1.6px">_</span>cron(), execution of @module<span style="position:relative;top:-1.6px">_</span>previous<span style="position:relative;top:-1.6px">_</span>cron() took @time.</div>
<div class="t" style="left:1622px;top:480.65px;font-size:17.5px;color:#a3a3a3;letter-spacing:0.1px">(BLOB) 93 bytes</div>
<div class="t" style="right:1617px;top:509.24px;font-size:17.5px;color:#333333;letter-spacing:0.1px">1042204</div>
<div class="t" style="right:1509px;top:509.24px;font-size:17.5px;color:#333333;letter-spacing:0.1px">0</div>
<div class="t" style="left:260.6px;top:509.24px;font-size:17.5px;color:#333333;letter-spacing:0.1px">cron</div>
<div class="t" style="left:398px;top:509.24px;font-size:17.5px;color:#333333;letter-spacing:0.1px">Attempting to re-run cron while it is already running.</div>
<div class="t" style="left:1622px;top:509.24px;font-size:17.5px;color:#a3a3a3;letter-spacing:0.1px">(BLOB) 6 bytes</div>
<div class="t" style="right:1617px;top:537.83px;font-size:17.5px;color:#333333;letter-spacing:0.1px">1042205</div>
<div class="t" style="right:1509px;top:537.83px;font-size:17.5px;color:#333333;letter-spacing:0.1px">0</div>
<div class="t" style="left:260.6px;top:537.83px;font-size:17.5px;color:#333333;letter-spacing:0.1px">cron</div>
<div class="t" style="left:398px;top:537.83px;font-size:17.5px;color:#333333;letter-spacing:0.1px">Attempting to re-run cron while it is already running.</div>
<div class="t" style="left:1622px;top:537.83px;font-size:17.5px;color:#a3a3a3;letter-spacing:0.1px">(BLOB) 6 bytes</div>
<div class="t" style="right:1617px;top:566.42px;font-size:17.5px;color:#333333;letter-spacing:0.1px">1042206</div>
<div class="t" style="right:1509px;top:566.42px;font-size:17.5px;color:#333333;letter-spacing:0.1px">0</div>
<div class="t" style="left:260.6px;top:566.42px;font-size:17.5px;color:#333333;letter-spacing:0.1px">cron</div>
<div class="t" style="left:398px;top:566.42px;font-size:17.5px;color:#333333;letter-spacing:0.1px">Starting execution of @module<span style="position:relative;top:-1.6px">_</span>cron(), execution of @module<span style="position:relative;top:-1.6px">_</span>previous<span style="position:relative;top:-1.6px">_</span>cron() took @time.</div>
<div class="t" style="left:1622px;top:566.42px;font-size:17.5px;color:#a3a3a3;letter-spacing:0.1px">(BLOB) 102 byte</div>
<div class="t" style="right:1617px;top:595.01px;font-size:17.5px;color:#333333;letter-spacing:0.1px">1042207</div>
<div class="t" style="right:1509px;top:595.01px;font-size:17.5px;color:#333333;letter-spacing:0.1px">0</div>
<div class="t" style="left:260.6px;top:595.01px;font-size:17.5px;color:#333333;letter-spacing:0.1px">cron</div>
<div class="t" style="left:398px;top:595.01px;font-size:17.5px;color:#333333;letter-spacing:0.1px">Starting execution of @module<span style="position:relative;top:-1.6px">_</span>cron(), execution of @module<span style="position:relative;top:-1.6px">_</span>previous<span style="position:relative;top:-1.6px">_</span>cron() took @time.</div>
<div class="t" style="left:1622px;top:595.01px;font-size:17.5px;color:#a3a3a3;letter-spacing:0.1px">(BLOB) 109 byte</div>
<div class="t" style="right:1617px;top:623.60px;font-size:17.5px;color:#333333;letter-spacing:0.1px">1042208</div>
<div class="t" style="right:1509px;top:623.60px;font-size:17.5px;color:#333333;letter-spacing:0.1px">0</div>
<div class="t" style="left:260.6px;top:623.60px;font-size:17.5px;color:#333333;letter-spacing:0.1px">cron</div>
<div class="t" style="left:398px;top:623.60px;font-size:17.5px;color:#333333;letter-spacing:0.1px">Starting execution of @module<span style="position:relative;top:-1.6px">_</span>cron(), execution of @module<span style="position:relative;top:-1.6px">_</span>previous<span style="position:relative;top:-1.6px">_</span>cron() took @time.</div>
<div class="t" style="left:1622px;top:623.60px;font-size:17.5px;color:#a3a3a3;letter-spacing:0.1px">(BLOB) 105 byte</div>
<div class="t" style="right:1617px;top:652.19px;font-size:17.5px;color:#333333;letter-spacing:0.1px">1042209</div>
<div class="t" style="right:1509px;top:652.19px;font-size:17.5px;color:#333333;letter-spacing:0.1px">0</div>
<div class="t" style="left:260.6px;top:652.19px;font-size:17.5px;color:#333333;letter-spacing:0.1px">cron</div>
<div class="t" style="left:398px;top:652.19px;font-size:17.5px;color:#333333;letter-spacing:0.1px">Starting execution of @module<span style="position:relative;top:-1.6px">_</span>cron(), execution of @module<span style="position:relative;top:-1.6px">_</span>previous<span style="position:relative;top:-1.6px">_</span>cron() took @time.</div>
<div class="t" style="left:1622px;top:652.19px;font-size:17.5px;color:#a3a3a3;letter-spacing:0.1px">(BLOB) 97 bytes</div>
<div class="t" style="right:1617px;top:680.78px;font-size:17.5px;color:#333333;letter-spacing:0.1px">1042210</div>
<div class="t" style="right:1509px;top:680.78px;font-size:17.5px;color:#333333;letter-spacing:0.1px">0</div>
<div class="t" style="left:260.6px;top:680.78px;font-size:17.5px;color:#333333;letter-spacing:0.1px">cron</div>
<div class="t" style="left:398px;top:680.78px;font-size:17.5px;color:#333333;letter-spacing:0.1px">Starting execution of @module<span style="position:relative;top:-1.6px">_</span>cron(), execution of @module<span style="position:relative;top:-1.6px">_</span>previous<span style="position:relative;top:-1.6px">_</span>cron() took @time.</div>
<div class="t" style="left:1622px;top:680.78px;font-size:17.5px;color:#a3a3a3;letter-spacing:0.1px">(BLOB) 99 bytes</div>
<div class="t" style="right:1617px;top:709.37px;font-size:17.5px;color:#333333;letter-spacing:0.1px">1042211</div>
<div class="t" style="right:1509px;top:709.37px;font-size:17.5px;color:#333333;letter-spacing:0.1px">0</div>
<div class="t" style="left:260.6px;top:709.37px;font-size:17.5px;color:#333333;letter-spacing:0.1px">cron</div>
<div class="t" style="left:398px;top:709.37px;font-size:17.5px;color:#333333;letter-spacing:0.1px">Starting execution of @module<span style="position:relative;top:-1.6px">_</span>cron(), execution of @module<span style="position:relative;top:-1.6px">_</span>previous<span style="position:relative;top:-1.6px">_</span>cron() took @time.</div>
<div class="t" style="left:1622px;top:709.37px;font-size:17.5px;color:#a3a3a3;letter-spacing:0.1px">(BLOB) 106 byte</div>
<div class="t" style="right:1617px;top:737.96px;font-size:17.5px;color:#333333;letter-spacing:0.1px">1042212</div>
<div class="t" style="right:1509px;top:737.96px;font-size:17.5px;color:#333333;letter-spacing:0.1px">0</div>
<div class="t" style="left:260.6px;top:737.96px;font-size:17.5px;color:#333333;letter-spacing:0.1px">cron</div>
<div class="t" style="left:398px;top:737.96px;font-size:17.5px;color:#333333;letter-spacing:0.1px">Execution of @module<span style="position:relative;top:-1.6px">_</span>previous<span style="position:relative;top:-1.6px">_</span>cron() took @time.</div>
<div class="t" style="left:1622px;top:737.96px;font-size:17.5px;color:#a3a3a3;letter-spacing:0.1px">(BLOB) 78 bytes</div>
<div class="t" style="right:1617px;top:766.55px;font-size:17.5px;color:#333333;letter-spacing:0.1px">1042213</div>
<div class="t" style="right:1509px;top:766.55px;font-size:17.5px;color:#333333;letter-spacing:0.1px">0</div>
<div class="t" style="left:260.6px;top:766.55px;font-size:17.5px;color:#333333;letter-spacing:0.1px">type</div>
<div class="t" style="left:398px;top:766.55px;font-size:17.5px;color:#333333;letter-spacing:0.1px">SMS system: please, go here: /admin/config/system/smssystem/api and add all necessary configs or you won&#x27;t be able to use the system.</div>
<div class="t" style="left:1622px;top:766.55px;font-size:17.5px;color:#a3a3a3;letter-spacing:0.1px">(BLOB) 6 bytes</div>
<div class="t" style="right:1617px;top:795.14px;font-size:17.5px;color:#333333;letter-spacing:0.1px">1042214</div>
<div class="t" style="right:1509px;top:795.14px;font-size:17.5px;color:#333333;letter-spacing:0.1px">0</div>
<div class="t" style="left:260.6px;top:795.14px;font-size:17.5px;color:#333333;letter-spacing:0.1px">cron</div>
<div class="t" style="left:398px;top:795.14px;font-size:17.5px;color:#333333;letter-spacing:0.1px">Cron run completed.</div>
<div class="t" style="left:1622px;top:795.14px;font-size:17.5px;color:#a3a3a3;letter-spacing:0.1px">(BLOB) 6 bytes</div>
<div class="t" style="right:1617px;top:823.73px;font-size:17.5px;color:#333333;letter-spacing:0.1px">1042215</div>
<div class="t" style="right:1509px;top:823.73px;font-size:17.5px;color:#333333;letter-spacing:0.1px">1</div>
<div class="t" style="left:260.6px;top:823.73px;font-size:17.5px;color:#333333;letter-spacing:0.1px">webform</div>
<div class="t" style="left:398px;top:823.73px;font-size:17.5px;color:#333333;letter-spacing:0.1px">Deleted @form: Submission #@id.</div>
<div class="t" style="left:1622px;top:823.73px;font-size:17.5px;color:#a3a3a3;letter-spacing:0.1px">(BLOB) 84 bytes</div>
<div class="t" style="right:1617px;top:852.32px;font-size:17.5px;color:#333333;letter-spacing:0.1px">1042216</div>
<div class="t" style="right:1509px;top:852.32px;font-size:17.5px;color:#333333;letter-spacing:0.1px">1</div>
<div class="t" style="left:260.6px;top:852.32px;font-size:17.5px;color:#333333;letter-spacing:0.1px">webform</div>
<div class="t" style="left:398px;top:852.32px;font-size:17.5px;color:#333333;letter-spacing:0.1px">Deleted @form: Submission #@id.</div>
<div class="t" style="left:1622px;top:852.32px;font-size:17.5px;color:#a3a3a3;letter-spacing:0.1px">(BLOB) 84 bytes</div>
<div class="t" style="right:1617px;top:880.91px;font-size:17.5px;color:#333333;letter-spacing:0.1px">1042217</div>
<div class="t" style="right:1509px;top:880.91px;font-size:17.5px;color:#333333;letter-spacing:0.1px">1</div>
<div class="t" style="left:260.6px;top:880.91px;font-size:17.5px;color:#333333;letter-spacing:0.1px">webform</div>
<div class="t" style="left:398px;top:880.91px;font-size:17.5px;color:#333333;letter-spacing:0.1px">Deleted @form: Submission #@id.</div>
<div class="t" style="left:1622px;top:880.91px;font-size:17.5px;color:#a3a3a3;letter-spacing:0.1px">(BLOB) 84 bytes</div>
<div class="t" style="right:1617px;top:909.50px;font-size:17.5px;color:#333333;letter-spacing:0.1px">1042218</div>
<div class="t" style="right:1509px;top:909.50px;font-size:17.5px;color:#333333;letter-spacing:0.1px">1</div>
<div class="t" style="left:260.6px;top:909.50px;font-size:17.5px;color:#333333;letter-spacing:0.1px">webform</div>
<div class="t" style="left:398px;top:909.50px;font-size:17.5px;color:#333333;letter-spacing:0.1px">The @entity-type %label has been deleted.</div>
<div class="t" style="left:1622px;top:909.50px;font-size:17.5px;color:#a3a3a3;letter-spacing:0.1px">(BLOB) 225 byte</div>
<div class="t" style="right:1617px;top:938.09px;font-size:17.5px;color:#333333;letter-spacing:0.1px">1042219</div>
<div class="t" style="right:1509px;top:938.09px;font-size:17.5px;color:#333333;letter-spacing:0.1px">1</div>
<div class="t" style="left:260.6px;top:938.09px;font-size:17.5px;color:#333333;letter-spacing:0.1px">webform</div>
<div class="t" style="left:398px;top:938.09px;font-size:17.5px;color:#333333;letter-spacing:0.1px">Webform settings @label has been saved.</div>
<div class="t" style="left:1622px;top:938.09px;font-size:17.5px;color:#a3a3a3;letter-spacing:0.1px">(BLOB) 59 bytes</div>
<div class="t" style="right:1617px;top:966.68px;font-size:17.5px;color:#333333;letter-spacing:0.1px">1042220</div>
<div class="t" style="right:1509px;top:966.68px;font-size:17.5px;color:#333333;letter-spacing:0.1px">0</div>
<div class="t" style="left:260.6px;top:966.68px;font-size:17.5px;color:#333333;letter-spacing:0.1px">access denied</div>
<div class="t" style="left:398px;top:966.68px;font-size:17.5px;color:#333333;letter-spacing:0.1px">Path: @uri. %type: @message in %function (line %line of %file).</div>
<div class="t" style="left:1622px;top:966.68px;font-size:17.5px;color:#a3a3a3;letter-spacing:0.1px">(BLOB) 342 byte</div>
<div class="t" style="right:1617px;top:995.27px;font-size:17.5px;color:#333333;letter-spacing:0.1px">1042221</div>
<div class="t" style="right:1509px;top:995.27px;font-size:17.5px;color:#333333;letter-spacing:0.1px">1</div>
<div class="t" style="left:260.6px;top:995.27px;font-size:17.5px;color:#333333;letter-spacing:0.1px">user</div>
<div class="t" style="left:398px;top:995.27px;font-size:17.5px;color:#333333;letter-spacing:0.1px">Session opened for %name.</div>
<div class="t" style="left:1622px;top:995.27px;font-size:17.5px;color:#a3a3a3;letter-spacing:0.1px">(BLOB) 39 bytes</div>
<div class="t" style="right:1617px;top:1023.86px;font-size:17.5px;color:#333333;letter-spacing:0.1px">1042222</div>
<div class="t" style="right:1509px;top:1023.86px;font-size:17.5px;color:#333333;letter-spacing:0.1px">1</div>
<div class="t" style="left:260.6px;top:1023.86px;font-size:17.5px;color:#333333;letter-spacing:0.1px">user</div>
<div class="t" style="left:398px;top:1023.86px;font-size:17.5px;color:#333333;letter-spacing:0.1px">User %name used one-time login link at time %timestamp.</div>
<div class="t" style="left:1622px;top:1023.86px;font-size:17.5px;color:#a3a3a3;letter-spacing:0.1px">(BLOB) 75 bytes</div>
<div class="t" style="right:1617px;top:1052.45px;font-size:17.5px;color:#333333;letter-spacing:0.1px">1042223</div>
<div class="t" style="right:1509px;top:1052.45px;font-size:17.5px;color:#333333;letter-spacing:0.1px">1</div>
<div class="t" style="left:260.6px;top:1052.45px;font-size:17.5px;color:#333333;letter-spacing:0.1px">user</div>
<div class="t" style="left:398px;top:1052.45px;font-size:17.5px;color:#333333;letter-spacing:0.1px">Session closed for %name.</div>
<div class="t" style="left:1622px;top:1052.45px;font-size:17.5px;color:#a3a3a3;letter-spacing:0.1px">(BLOB) 39 bytes</div>
<div class="t" style="right:1617px;top:1081.04px;font-size:17.5px;color:#333333;letter-spacing:0.1px">1042224</div>
<div class="t" style="right:1509px;top:1081.04px;font-size:17.5px;color:#333333;letter-spacing:0.1px">0</div>
<div class="t" style="left:260.6px;top:1081.04px;font-size:17.5px;color:#333333;letter-spacing:0.1px">cron</div>
<div class="t" style="left:398px;top:1081.04px;font-size:17.5px;color:#333333;letter-spacing:0.1px">Starting execution of @module<span style="position:relative;top:-1.6px">_</span>cron().</div>
<div class="t" style="left:1622px;top:1081.04px;font-size:17.5px;color:#a3a3a3;letter-spacing:0.1px">(BLOB) 34 bytes</div>
<div class="t" style="right:1617px;top:1109.63px;font-size:17.5px;color:#333333;letter-spacing:0.1px">1042225</div>
<div class="t" style="right:1509px;top:1109.63px;font-size:17.5px;color:#333333;letter-spacing:0.1px">0</div>
<div class="t" style="left:260.6px;top:1109.63px;font-size:17.5px;color:#333333;letter-spacing:0.1px">cron</div>
<div class="t" style="left:398px;top:1109.63px;font-size:17.5px;color:#333333;letter-spacing:0.1px">Starting execution of @module<span style="position:relative;top:-1.6px">_</span>cron(), execution of @module<span style="position:relative;top:-1.6px">_</span>previous<span style="position:relative;top:-1.6px">_</span>cron() took @time.</div>
<div class="t" style="left:1622px;top:1109.63px;font-size:17.5px;color:#a3a3a3;letter-spacing:0.1px">(BLOB) 97 bytes</div>
<div class="t" style="right:1617px;top:1138.22px;font-size:17.5px;color:#333333;letter-spacing:0.1px">1042226</div>
<div class="t" style="right:1509px;top:1138.22px;font-size:17.5px;color:#333333;letter-spacing:0.1px">0</div>
<div class="t" style="left:260.6px;top:1138.22px;font-size:17.5px;color:#333333;letter-spacing:0.1px">cron</div>
<div class="t" style="left:398px;top:1138.22px;font-size:17.5px;color:#333333;letter-spacing:0.1px">Starting execution of @module<span style="position:relative;top:-1.6px">_</span>cron(), execution of @module<span style="position:relative;top:-1.6px">_</span>previous<span style="position:relative;top:-1.6px">_</span>cron() took @time.</div>
<div class="t" style="left:1622px;top:1138.22px;font-size:17.5px;color:#a3a3a3;letter-spacing:0.1px">(BLOB) 95 bytes</div>
</div>
<div class="a" style="left:524px;top:143px;width:1750px;height:39px;background:#ffffff"></div>
<div class="a" style="left:524px;top:182px;width:1750px;height:2px;background:#e3e3e3"></div>
<div class="a" style="left:554px;top:143px;width:2px;height:39px;background:#e6e6e6"></div>
<div class="a" style="left:665.4px;top:151px;width:1.5px;height:23px;background:#e4e4e4"></div>
<div class="a" style="left:773.3px;top:151px;width:1.5px;height:23px;background:#e4e4e4"></div>
<div class="a" style="left:910.8px;top:151px;width:1.5px;height:23px;background:#e4e4e4"></div>
<div class="a" style="left:2134.6px;top:151px;width:1.5px;height:23px;background:#e4e4e4"></div>
<div class="t" style="left:568px;top:154.61px;font-size:17px;color:#262626;letter-spacing:0.35px;font-weight:normal;">wid</div>
<div class="t" style="left:676px;top:154.61px;font-size:17px;color:#262626;letter-spacing:0.35px;font-weight:normal;">uid</div>
<div class="t" style="left:784px;top:154.61px;font-size:17px;color:#262626;letter-spacing:0.35px;font-weight:normal;">type</div>
<div class="t" style="left:922px;top:154.61px;font-size:17px;color:#262626;letter-spacing:0.35px;font-weight:normal;">message</div>
<div class="t" style="left:2146px;top:154.61px;font-size:17px;color:#262626;letter-spacing:0.35px;font-weight:normal;">variables</div>
<div class="a" style="left:524px;top:1342px;width:1753px;height:1px;background:#d8d8d8"></div>
<div class="a" style="left:524px;top:1343px;width:1753px;height:42px;background:#ffffff"></div>
<div class="a" style="left:0px;top:1385px;width:2277px;height:1px;background:#d4d4d4"></div>
<div class="a" style="left:0px;top:1386px;width:2277px;height:35px;background:#f6f6f6"></div>
<div class="t" style="left:637px;width:1000px;text-align:center;top:1394.61px;font-size:17px;color:#3a3a3a;letter-spacing:0.25px;font-weight:normal;">1000 records in page 1</div>
<div class="t" style="left:1070px;top:1354.79px;font-size:19.5px;color:#262626;letter-spacing:0.45px;font-weight:normal;">SELECT * FROM `db`.`watchdog` LIMIT 0,1000</div>
<svg style="left:550px;top:1355px" width="18" height="18" viewBox="0 0 18 18"><path d="M9 1.2 V16.8 M1.2 9 H16.8" stroke="#5a5a5a" stroke-width="2.6"/></svg>
<svg style="left:583px;top:1355px" width="18" height="18" viewBox="0 0 18 18"><path d="M1.2 8.6 H16.2" stroke="#5a5a5a" stroke-width="2.6"/></svg>
<svg style="left:632px;top:1355px" width="22" height="18" viewBox="0 0 22 18"><path d="M2 9.6 L7.6 15.2 L19 3" fill="none" stroke="#c2c2c2" stroke-width="2.4" stroke-linejoin="miter"/></svg>
<svg style="left:669px;top:1355px" width="18" height="18" viewBox="0 0 18 18"><path d="M2.4 2.4 L14.8 14.8 M14.8 2.4 L2.4 14.8" stroke="#c2c2c2" stroke-width="2.4"/></svg>
<svg style="left:718px;top:1355px" width="18" height="18" viewBox="0 0 18 18"><path d="M14.4 7.6 A6.4 6.4 0 1 0 14.6 11.6" fill="none" stroke="#5a5a5a" stroke-width="2.6"/><path d="M10.6 7.4 H17 V1.2 Z" fill="#5a5a5a"/></svg>
<svg style="left:753.5px;top:1356px" width="16" height="16" viewBox="0 0 16 16"><rect x="0.2" y="0.4" width="15.2" height="14.6" rx="1.8" fill="#c4c4c4"/></svg>
<svg style="left:1950px;top:1358px" width="20" height="14" viewBox="0 0 20 14"><path d="M1.6 0.6 V13.2" stroke="#5a5a5a" stroke-width="2.6"/><path d="M4 6.9 L10.6 1 V12.8 Z" fill="#5a5a5a"/><path d="M9 6.9 H18.6" stroke="#5a5a5a" stroke-width="2.6"/></svg>
<svg style="left:1982px;top:1358px" width="16" height="14" viewBox="0 0 16 14"><path d="M0.8 6.9 L7.4 1 V12.8 Z" fill="#5a5a5a"/><path d="M6 6.9 H15.6" stroke="#5a5a5a" stroke-width="2.6"/></svg>
<div class="a" style="left:2009px;top:1351px;width:50px;height:26px;background:#fff;box-shadow:0 0 0 0.6px rgba(0,0,0,0.12),0 0.8px 1.2px rgba(0,0,0,0.22)"></div>
<div class="t" style="left:2014.5px;top:1356.19px;font-size:17.5px;color:#262626;letter-spacing:0px;font-weight:normal;">1</div>
<svg style="left:2073px;top:1358px" width="18" height="14" viewBox="0 0 18 14"><path d="M16.8 6.9 L10.2 1 V12.8 Z" fill="#5a5a5a"/><path d="M1 6.9 H11.6" stroke="#5a5a5a" stroke-width="2.6"/></svg>
<svg style="left:2102px;top:1358px" width="20" height="14" viewBox="0 0 20 14"><path d="M17.6 0.6 V13.2" stroke="#5a5a5a" stroke-width="2.6"/><path d="M15.2 6.9 L8.6 1 V12.8 Z" fill="#5a5a5a"/><path d="M0.6 6.9 H10.2" stroke="#5a5a5a" stroke-width="2.6"/></svg>
<svg style="left:2136px;top:1358px" width="18" height="18" viewBox="0 0 18 18"><g transform="translate(9,9)"><rect x="-1.9" y="-8.6" width="3.8" height="4.4" rx="0.6" fill="#5a5a5a" transform="rotate(0)"/><rect x="-1.9" y="-8.6" width="3.8" height="4.4" rx="0.6" fill="#5a5a5a" transform="rotate(45)"/><rect x="-1.9" y="-8.6" width="3.8" height="4.4" rx="0.6" fill="#5a5a5a" transform="rotate(90)"/><rect x="-1.9" y="-8.6" width="3.8" height="4.4" rx="0.6" fill="#5a5a5a" transform="rotate(135)"/><rect x="-1.9" y="-8.6" width="3.8" height="4.4" rx="0.6" fill="#5a5a5a" transform="rotate(180)"/><rect x="-1.9" y="-8.6" width="3.8" height="4.4" rx="0.6" fill="#5a5a5a" transform="rotate(225)"/><rect x="-1.9" y="-8.6" width="3.8" height="4.4" rx="0.6" fill="#5a5a5a" transform="rotate(270)"/><rect x="-1.9" y="-8.6" width="3.8" height="4.4" rx="0.6" fill="#5a5a5a" transform="rotate(315)"/><circle r="5.6" fill="none" stroke="#5a5a5a" stroke-width="3.4"/></g></svg>
<svg style="left:2187px;top:1355px" width="24" height="24" viewBox="0 0 24 24"><rect x="2.4" y="1.7" width="19.6" height="19.4" fill="#e9f8ff" stroke="#2f7de0" stroke-width="1.5"/><rect x="1.7" y="1" width="21" height="2.9" fill="#2f7de0"/><path d="M8.3 1.7 V21.1 M15.8 1.7 V21.1 M2.4 9.4 H22 M2.4 15.5 H22" stroke="#2f7de0" stroke-width="1.5"/></svg>
<svg style="left:2230px;top:1355px" width="24" height="24" viewBox="0 0 24 24"><rect x="1.7" y="1.7" width="20" height="19.4" fill="#fff" stroke="#5a5a5a" stroke-width="1.4"/><rect x="1" y="1" width="21.4" height="2.9" fill="#5a5a5a"/><path d="M4.6 7.2 V11.4 M4.6 13.3 V17.5" stroke="#5a5a5a" stroke-width="1.2"/><rect x="7.6" y="7.6" width="10.8" height="3.4" fill="none" stroke="#5a5a5a" stroke-width="1.5"/><rect x="7.6" y="13.7" width="10.8" height="3.4" fill="none" stroke="#5a5a5a" stroke-width="1.5"/></svg>
<div class="a" style="left:2274px;top:43px;width:3px;height:1378px;background:#e9e9e9"></div>
</div></body></html>
